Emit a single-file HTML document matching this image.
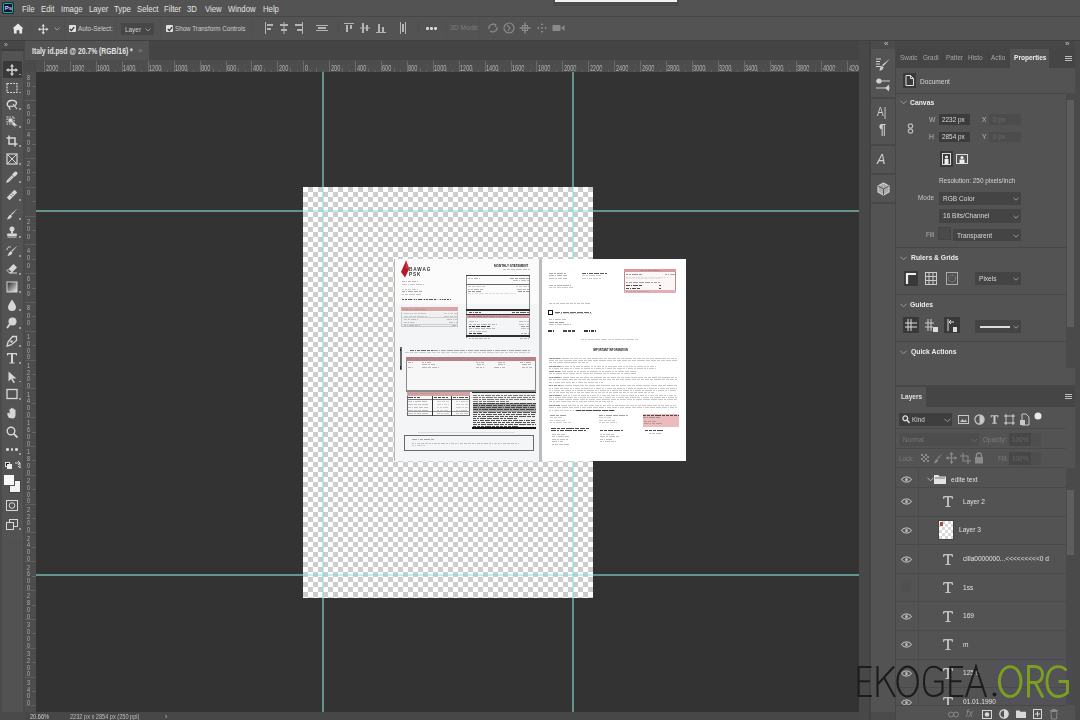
<!DOCTYPE html>
<html><head><meta charset="utf-8">
<style>
*{margin:0;padding:0;box-sizing:border-box}
html,body{width:1080px;height:720px;overflow:hidden;background:#333;font-family:"Liberation Sans",sans-serif;color:#d8d8d8}
.a{position:absolute}
.t{position:absolute;white-space:nowrap;transform-origin:0 0;line-height:1}
svg{position:absolute;overflow:visible}
</style></head><body><div id="root" style="position:absolute;left:0;top:0;width:1080px;height:720px;filter:blur(0.3px)">
<div class="a" style="left:0px;top:0px;width:1080px;height:16px;background:#535353;"></div>
<div class="a" style="left:2.2px;top:2.2px;width:11.8px;height:11.8px;background:#10303a;border-radius:2px;"></div>
<div class="a" style="left:3.2px;top:3.2px;width:9.8px;height:9.8px;background:#0a1a30;border:1.2px solid #3c9aa0;border-radius:1px;"></div>
<div class="t" style="left:4.8px;top:5.2px;font-size:6px;color:#c8d0ff;font-weight:bold;transform:scaleX(1);">Ps</div>
<div class="t" style="left:22px;top:4.6px;font-size:9px;color:#e2e2e2;transform:scaleX(0.86);">File</div>
<div class="t" style="left:41px;top:4.6px;font-size:9px;color:#e2e2e2;transform:scaleX(0.86);">Edit</div>
<div class="t" style="left:61px;top:4.6px;font-size:9px;color:#e2e2e2;transform:scaleX(0.86);">Image</div>
<div class="t" style="left:89px;top:4.6px;font-size:9px;color:#e2e2e2;transform:scaleX(0.86);">Layer</div>
<div class="t" style="left:114px;top:4.6px;font-size:9px;color:#e2e2e2;transform:scaleX(0.86);">Type</div>
<div class="t" style="left:137px;top:4.6px;font-size:9px;color:#e2e2e2;transform:scaleX(0.86);">Select</div>
<div class="t" style="left:164px;top:4.6px;font-size:9px;color:#e2e2e2;transform:scaleX(0.86);">Filter</div>
<div class="t" style="left:187px;top:4.6px;font-size:9px;color:#e2e2e2;transform:scaleX(0.86);">3D</div>
<div class="t" style="left:205px;top:4.6px;font-size:9px;color:#e2e2e2;transform:scaleX(0.86);">View</div>
<div class="t" style="left:228px;top:4.6px;font-size:9px;color:#e2e2e2;transform:scaleX(0.86);">Window</div>
<div class="t" style="left:263px;top:4.6px;font-size:9px;color:#e2e2e2;transform:scaleX(0.86);">Help</div>
<div class="a" style="left:553px;top:0px;width:126px;height:6px;background:#4b4b4b;"></div>
<div class="a" style="left:555px;top:0px;width:122px;height:2px;background:#f2f2f2;"></div>
<div class="a" style="left:0px;top:16px;width:1080px;height:1px;background:#474747;"></div>
<div class="a" style="left:0px;top:17px;width:1080px;height:23px;background:#535353;"></div>
<div class="a" style="left:0px;top:40px;width:1080px;height:1px;background:#3f3f3f;"></div>
<svg style="left:11.5px;top:23.3px" width="12" height="11" viewBox="0 0 13 12"><path d="M6.5 0.5 L12.5 6 L11 6 L11 11.5 L8 11.5 L8 8 L5 8 L5 11.5 L2 11.5 L2 6 L0.5 6 Z" fill="#e8e8e8"/></svg>
<svg style="left:38px;top:23.5px" width="10.5" height="10.5" viewBox="0 0 12 12"><path d="M6 0 L8 2.5 L6.7 2.5 L6.7 5.3 L9.5 5.3 L9.5 4 L12 6 L9.5 8 L9.5 6.7 L6.7 6.7 L6.7 9.5 L8 9.5 L6 12 L4 9.5 L5.3 9.5 L5.3 6.7 L2.5 6.7 L2.5 8 L0 6 L2.5 4 L2.5 5.3 L5.3 5.3 L5.3 2.5 L4 2.5 Z" fill="#dcdcdc"/></svg>
<svg style="left:54px;top:27px" width="6" height="4" viewBox="0 0 6 4"><path d="M0.5 0.5 L3 3 L5.5 0.5" stroke="#999" fill="none" stroke-width="1"/></svg>
<div class="a" style="left:30px;top:20px;width:1px;height:17px;background:#4f4f4f;"></div>
<div class="a" style="left:64px;top:20px;width:1px;height:17px;background:#4f4f4f;"></div>
<div class="a" style="left:116px;top:20px;width:1px;height:17px;background:#4f4f4f;"></div>
<div class="a" style="left:160px;top:20px;width:1px;height:17px;background:#4f4f4f;"></div>
<div class="a" style="left:252px;top:20px;width:1px;height:17px;background:#4f4f4f;"></div>
<div class="a" style="left:338px;top:20px;width:1px;height:17px;background:#4f4f4f;"></div>
<div class="a" style="left:418px;top:20px;width:1px;height:17px;background:#4f4f4f;"></div>
<div class="a" style="left:446px;top:20px;width:1px;height:17px;background:#4f4f4f;"></div>
<div class="a" style="left:479px;top:20px;width:1px;height:17px;background:#4f4f4f;"></div>
<div class="a" style="left:68.5px;top:25px;width:7px;height:7px;background:#e0e0e0;border-radius:1px;"></div>
<svg style="left:69px;top:25.5px" width="6" height="6" viewBox="0 0 6 6"><path d="M0.8 3 L2.4 4.6 L5.2 1.2" stroke="#333" fill="none" stroke-width="1.3"/></svg>
<div class="t" style="left:78px;top:25px;font-size:8px;color:#cccccc;transform:scaleX(0.8);">Auto-Select:</div>
<div class="a" style="left:121px;top:23.3px;width:32.5px;height:12px;background:#474747;"></div>
<div class="t" style="left:125px;top:25.5px;font-size:8px;color:#cfcfcf;transform:scaleX(0.8);">Layer</div>
<svg style="left:145px;top:28px" width="6" height="4" viewBox="0 0 6 4"><path d="M0.5 0.5 L3 3 L5.5 0.5" stroke="#999" fill="none" stroke-width="1"/></svg>
<div class="a" style="left:166px;top:25px;width:7px;height:7px;background:#e0e0e0;border-radius:1px;"></div>
<svg style="left:166.5px;top:25.5px" width="6" height="6" viewBox="0 0 6 6"><path d="M0.8 3 L2.4 4.6 L5.2 1.2" stroke="#333" fill="none" stroke-width="1.3"/></svg>
<div class="t" style="left:175px;top:25px;font-size:8px;color:#cccccc;transform:scaleX(0.78);">Show Transform Controls</div>
<svg style="left:264px;top:22px" width="10" height="12" viewBox="0 0 10 12"><rect x="1" y="0" width="1" height="12" fill="#b4b4b4"/><rect x="3" y="2" width="6" height="2" fill="#b4b4b4"/><rect x="3" y="6" width="4" height="2" fill="#b4b4b4"/></svg>
<svg style="left:279px;top:22px" width="10" height="12" viewBox="0 0 10 12"><rect x="4.5" y="0" width="1" height="12" fill="#b4b4b4"/><rect x="1" y="2" width="8" height="2" fill="#b4b4b4"/><rect x="2" y="7" width="6" height="2" fill="#b4b4b4"/></svg>
<svg style="left:294px;top:22px" width="10" height="12" viewBox="0 0 10 12"><rect x="8" y="0" width="1" height="12" fill="#b4b4b4"/><rect x="1" y="2" width="7" height="2" fill="#b4b4b4"/><rect x="3" y="7" width="5" height="2" fill="#b4b4b4"/></svg>
<svg style="left:316px;top:22px" width="12" height="12" viewBox="0 0 12 12"><rect x="0" y="3" width="12" height="1" fill="#b4b4b4"/><rect x="0" y="8" width="12" height="1" fill="#b4b4b4"/><rect x="2" y="5" width="8" height="2" fill="#b4b4b4"/></svg>
<svg style="left:344px;top:22px" width="10" height="12" viewBox="0 0 10 12"><rect x="0" y="1" width="10" height="1" fill="#b4b4b4"/><rect x="2" y="3" width="2" height="7" fill="#b4b4b4"/><rect x="6" y="3" width="2" height="4" fill="#b4b4b4"/></svg>
<svg style="left:360px;top:22px" width="10" height="12" viewBox="0 0 10 12"><rect x="0" y="5.5" width="10" height="1" fill="#b4b4b4"/><rect x="2" y="1" width="2" height="10" fill="#b4b4b4"/><rect x="6" y="3" width="2" height="6" fill="#b4b4b4"/></svg>
<svg style="left:376px;top:22px" width="10" height="12" viewBox="0 0 10 12"><rect x="0" y="10" width="10" height="1" fill="#b4b4b4"/><rect x="2" y="2" width="2" height="8" fill="#b4b4b4"/><rect x="6" y="5" width="2" height="5" fill="#b4b4b4"/></svg>
<svg style="left:399px;top:22px" width="8" height="12" viewBox="0 0 8 12"><rect x="1" y="0" width="1" height="12" fill="#b4b4b4"/><rect x="6" y="0" width="1" height="12" fill="#b4b4b4"/><rect x="3" y="2" width="2" height="8" fill="#b4b4b4"/></svg>
<div class="a" style="left:426px;top:27px;width:2.5px;height:2.5px;background:#dcdcdc;border-radius:50%;"></div>
<div class="a" style="left:430px;top:27px;width:2.5px;height:2.5px;background:#dcdcdc;border-radius:50%;"></div>
<div class="a" style="left:434px;top:27px;width:2.5px;height:2.5px;background:#dcdcdc;border-radius:50%;"></div>
<div class="t" style="left:450px;top:24px;font-size:8px;color:#7c7c7c;transform:scaleX(0.85);">3D Mode:</div>
<svg style="left:487px;top:22px" width="12" height="12" viewBox="0 0 12 12"><path d="M2 7 C1 3 6 1 9 3 M10 5 C11 9 6 11 3 9" stroke="#8a8a8a" fill="none" stroke-width="1.2"/><path d="M7 2 L9 3 L8 5" stroke="#8a8a8a" fill="none"/></svg>
<svg style="left:503px;top:22px" width="12" height="12" viewBox="0 0 12 12"><circle cx="6" cy="6" r="5" stroke="#8a8a8a" fill="none" stroke-width="1.2"/><path d="M4 3 L7 6 L5 9" stroke="#8a8a8a" fill="none" stroke-width="1.1"/></svg>
<svg style="left:519px;top:22px" width="12" height="12" viewBox="0 0 12 12"><path d="M6 0.5 V11.5 M0.5 6 H11.5" stroke="#8a8a8a" stroke-width="1.4"/><rect x="3.5" y="3.5" width="5" height="5" stroke="#8a8a8a" fill="none"/></svg>
<svg style="left:536px;top:22px" width="12" height="12" viewBox="0 0 12 12"><path d="M6 1 L7.5 3 L4.5 3 Z M6 11 L7.5 9 L4.5 9 Z M1 6 L3 4.5 L3 7.5 Z M11 6 L9 4.5 L9 7.5 Z" fill="#8a8a8a"/><circle cx="6" cy="6" r="1" fill="#8a8a8a"/></svg>
<svg style="left:552px;top:23px" width="13" height="10" viewBox="0 0 13 10"><rect x="0.5" y="2" width="8" height="6" fill="#8a8a8a"/><path d="M9 5 L12.5 2 V8 Z" fill="#8a8a8a"/></svg>
<div class="a" style="left:25px;top:41px;width:834px;height:19px;background:#444444;"></div>
<div class="a" style="left:25px;top:41px;width:124px;height:19px;background:#535353;"></div>
<div class="t" style="left:32px;top:47px;font-size:8.5px;color:#e4e4e4;font-weight:bold;transform:scaleX(0.8);">Italy id.psd @ 20.7% (RGB/16) *</div>
<div class="t" style="left:138px;top:47px;font-size:8px;color:#8a8a8a;transform:scaleX(1);">×</div>
<div class="a" style="left:0px;top:41px;width:25px;height:679px;background:#4a4a4a;"></div>
<div class="a" style="left:0px;top:41px;width:25px;height:8px;background:#474747;"></div>
<div class="t" style="left:4px;top:41px;font-size:7px;color:#bbb;transform:scaleX(1);">»</div>
<div class="a" style="left:1px;top:49px;width:23px;height:2px;background:#3e3e3e;"></div>
<div class="a" style="left:2px;top:51px;width:21px;height:489px;background:#535353;"></div>
<div class="a" style="left:2px;top:540px;width:21px;height:172px;background:#525252;"></div>
<div class="a" style="left:3px;top:61px;width:19px;height:17px;background:#393939;"></div>
<svg style="left:6.0px;top:63.5px" width="12" height="12" viewBox="0 0 12 12"><path d="M6 0 L8 2.5 L6.7 2.5 L6.7 5.3 L9.5 5.3 L9.5 4 L12 6 L9.5 8 L9.5 6.7 L6.7 6.7 L6.7 9.5 L8 9.5 L6 12 L4 9.5 L5.3 9.5 L5.3 6.7 L2.5 6.7 L2.5 8 L0 6 L2.5 4 L2.5 5.3 L5.3 5.3 L5.3 2.5 L4 2.5 Z" fill="#d6d6d6"/></svg>
<div class="a" style="left:19px;top:73.5px;width:1.5px;height:1.5px;background:#9a9a9a;"></div>
<svg style="left:6.0px;top:81.5px" width="12" height="12" viewBox="0 0 12 12"><rect x="1" y="1.5" width="10" height="9" stroke="#d6d6d6" fill="none" stroke-width="1.2" stroke-dasharray="2 1"/></svg>
<div class="a" style="left:19px;top:91.5px;width:1.5px;height:1.5px;background:#9a9a9a;"></div>
<svg style="left:6.0px;top:98.0px" width="12" height="12" viewBox="0 0 12 12"><path d="M3 9 C0 7 1 3 5 2.5 C9 2 11.5 4 10 6.5 C9 8.5 6 8.5 4.5 8 M4.5 8 C3 9 3 11 4.5 11.5" stroke="#d6d6d6" fill="none" stroke-width="1.3"/><path d="M7 6 L11 11" stroke="#d6d6d6" stroke-width="1.2"/></svg>
<div class="a" style="left:19px;top:108px;width:1.5px;height:1.5px;background:#9a9a9a;"></div>
<svg style="left:6.0px;top:116.0px" width="12" height="12" viewBox="0 0 12 12"><rect x="1" y="1" width="7" height="7" stroke="#d6d6d6" fill="none" stroke-width="1.1" stroke-dasharray="1.5 1"/><rect x="2.5" y="2.5" width="4" height="4" fill="#d6d6d6"/><path d="M6 5 L11.5 9.5 L8.5 9.8 L10 12 L6.5 8.5 Z" fill="#d6d6d6"/></svg>
<div class="a" style="left:19px;top:126px;width:1.5px;height:1.5px;background:#9a9a9a;"></div>
<svg style="left:6.0px;top:135.0px" width="12" height="12" viewBox="0 0 12 12"><path d="M3 0.5 V9 H11.5 M0.5 3 H9 V11.5" stroke="#d6d6d6" fill="none" stroke-width="1.5"/></svg>
<div class="a" style="left:19px;top:145px;width:1.5px;height:1.5px;background:#9a9a9a;"></div>
<svg style="left:6.0px;top:153.0px" width="12" height="12" viewBox="0 0 12 12"><rect x="1" y="1" width="10" height="10" stroke="#d6d6d6" fill="none" stroke-width="1.2"/><path d="M1 1 L11 11 M11 1 L1 11" stroke="#d6d6d6" stroke-width="1"/></svg>
<div class="a" style="left:19px;top:163px;width:1.5px;height:1.5px;background:#9a9a9a;"></div>
<svg style="left:6.0px;top:171.0px" width="12" height="12" viewBox="0 0 12 12"><path d="M11 1 C12 2 11.5 3.5 10 4.5 L8.5 6 L6 3.5 L7.5 2 C8.5 0.5 10 0 11 1 Z" fill="#d6d6d6"/><path d="M6.5 4.5 L1.5 9.5 L1 11 L2.5 10.5 L7.5 5.5" stroke="#d6d6d6" fill="none" stroke-width="1.2"/></svg>
<div class="a" style="left:19px;top:181px;width:1.5px;height:1.5px;background:#9a9a9a;"></div>
<svg style="left:6.0px;top:189.0px" width="12" height="12" viewBox="0 0 12 12"><path d="M8.5 0.8 L11.2 3.5 L3.5 11.2 L0.8 8.5 Z" fill="#d6d6d6"/><path d="M4.5 6 L6 7.5 M6 4.5 L7.5 6" stroke="#535353" stroke-width="0.9"/></svg>
<div class="a" style="left:19px;top:199px;width:1.5px;height:1.5px;background:#9a9a9a;"></div>
<svg style="left:6.0px;top:208.0px" width="12" height="12" viewBox="0 0 12 12"><path d="M11.5 0.5 L6 7 L5 6 Z" fill="#d6d6d6"/><path d="M4.5 6.5 C3 7 2 9 1 11.5 C4 11 5.5 10 6 8 Z" fill="#d6d6d6"/></svg>
<div class="a" style="left:19px;top:218px;width:1.5px;height:1.5px;background:#9a9a9a;"></div>
<svg style="left:6.0px;top:226.0px" width="12" height="12" viewBox="0 0 12 12"><circle cx="6" cy="3" r="2.5" fill="#d6d6d6"/><rect x="5" y="5" width="2" height="2.5" fill="#d6d6d6"/><rect x="1" y="7.5" width="10" height="2.5" rx="1" fill="#d6d6d6"/><rect x="1.5" y="10.5" width="9" height="1" fill="#d6d6d6"/></svg>
<div class="a" style="left:19px;top:236px;width:1.5px;height:1.5px;background:#9a9a9a;"></div>
<svg style="left:6.0px;top:245.0px" width="12" height="12" viewBox="0 0 12 12"><path d="M11.5 0.5 L6.5 6.5 L5.5 5.5 Z" fill="#d6d6d6"/><path d="M5 6 C3.5 6.5 2.5 8.5 1.5 11 C4.5 10.5 6 9.5 6.5 7.5 Z" fill="#d6d6d6"/><path d="M1 5 C1 2 4 1 5 2.5" stroke="#d6d6d6" fill="none" stroke-width="1"/></svg>
<div class="a" style="left:19px;top:255px;width:1.5px;height:1.5px;background:#9a9a9a;"></div>
<svg style="left:6.0px;top:263.0px" width="12" height="12" viewBox="0 0 12 12"><path d="M7.5 1 L11 4.5 L6 9.5 L2.5 6 Z" fill="#d6d6d6"/><path d="M2.5 6 L1 7.5 L3.5 10 L6 9.5 M3.5 10 H11" stroke="#d6d6d6" fill="none" stroke-width="1"/></svg>
<div class="a" style="left:19px;top:273px;width:1.5px;height:1.5px;background:#9a9a9a;"></div>
<svg style="left:6.0px;top:281.0px" width="12" height="12" viewBox="0 0 12 12"><defs><linearGradient id="gg" x1="0" x2="1" y1="0" y2="1"><stop offset="0" stop-color="#222"/><stop offset="1" stop-color="#eee"/></linearGradient></defs><rect x="1" y="1" width="10" height="10" fill="url(#gg)" stroke="#d6d6d6" stroke-width="1"/></svg>
<div class="a" style="left:19px;top:291px;width:1.5px;height:1.5px;background:#9a9a9a;"></div>
<svg style="left:6.0px;top:299.0px" width="12" height="12" viewBox="0 0 12 12"><path d="M6 0.5 C8 4 10 6 10 8 A4 4 0 0 1 2 8 C2 6 4 4 6 0.5 Z" fill="#d6d6d6"/></svg>
<div class="a" style="left:19px;top:309px;width:1.5px;height:1.5px;background:#9a9a9a;"></div>
<svg style="left:6.0px;top:317.0px" width="12" height="12" viewBox="0 0 12 12"><circle cx="6.5" cy="4.5" r="4" fill="#d6d6d6"/><path d="M4 7 L1 11" stroke="#d6d6d6" stroke-width="1.8"/></svg>
<div class="a" style="left:19px;top:327px;width:1.5px;height:1.5px;background:#9a9a9a;"></div>
<svg style="left:6.0px;top:335.0px" width="12" height="12" viewBox="0 0 12 12"><path d="M10.5 1.5 L6.5 1.5 L2 7 L1 11 L5 10 L10.5 5.5 Z" stroke="#d6d6d6" fill="none" stroke-width="1.3"/><circle cx="5.5" cy="6.5" r="1.2" fill="#d6d6d6"/></svg>
<div class="a" style="left:19px;top:345px;width:1.5px;height:1.5px;background:#9a9a9a;"></div>
<svg style="left:6.0px;top:352.0px" width="12" height="12" viewBox="0 0 12 12"><path d="M1 1 H11 V3.5 H10 L9.5 2.3 H7 V10.5 H8.5 V11.5 H3.5 V10.5 H5 V2.3 H2.5 L2 3.5 H1 Z" fill="#d6d6d6"/></svg>
<div class="a" style="left:19px;top:362px;width:1.5px;height:1.5px;background:#9a9a9a;"></div>
<svg style="left:6.0px;top:370.5px" width="12" height="12" viewBox="0 0 12 12"><path d="M2.5 0.5 L10.5 7.5 L6.5 7.5 L9 11.5 L7.5 12 L5 8 L2.5 10.5 Z" fill="#d6d6d6"/></svg>
<div class="a" style="left:19px;top:380.5px;width:1.5px;height:1.5px;background:#9a9a9a;"></div>
<svg style="left:6.0px;top:388.0px" width="12" height="12" viewBox="0 0 12 12"><rect x="1" y="1.5" width="10" height="9" stroke="#d6d6d6" fill="none" stroke-width="1.3"/></svg>
<div class="a" style="left:19px;top:398px;width:1.5px;height:1.5px;background:#9a9a9a;"></div>
<svg style="left:6.0px;top:406.5px" width="12" height="12" viewBox="0 0 12 12"><path d="M3 11 C1.5 9 1 7 1.5 6 C2 5.5 3 6 3.5 7 V2.5 C3.5 1.5 5 1.5 5 2.5 V1.5 C5 0.5 6.5 0.5 6.5 1.5 V2 C6.5 1 8 1 8 2 V3 C8 2 9.5 2 9.5 3 V8 C9.5 10 8.5 11 7.5 11.5 Z" fill="#d6d6d6"/></svg>
<svg style="left:6.0px;top:425.5px" width="12" height="12" viewBox="0 0 12 12"><circle cx="5" cy="5" r="3.8" stroke="#d6d6d6" fill="none" stroke-width="1.4"/><path d="M7.8 7.8 L11.5 11.5" stroke="#d6d6d6" stroke-width="1.8"/></svg>
<div class="a" style="left:6px;top:448px;width:2.5px;height:2.5px;background:#d6d6d6;border-radius:50%;"></div>
<div class="a" style="left:10.5px;top:448px;width:2.5px;height:2.5px;background:#d6d6d6;border-radius:50%;"></div>
<div class="a" style="left:15px;top:448px;width:2.5px;height:2.5px;background:#d6d6d6;border-radius:50%;"></div>
<div class="a" style="left:19px;top:453px;width:1.5px;height:1.5px;background:#9a9a9a;"></div>
<div class="a" style="left:5px;top:462px;width:5px;height:5px;background:#111;border:1px solid #ddd;"></div>
<div class="a" style="left:7px;top:464px;width:5px;height:5px;background:#eee;"></div>
<svg style="left:14px;top:461px" width="8" height="8" viewBox="0 0 8 8"><path d="M1 2 H6 V7 M4 0 L6 2 L4 4 M6 7 L4 5" stroke="#d6d6d6" fill="none"/></svg>
<div class="a" style="left:9px;top:480px;width:11.5px;height:12.5px;background:#f2f2f2;border:1px solid #444;"></div>
<div class="a" style="left:3px;top:474px;width:11.5px;height:12px;background:#f8f8f8;border:1px solid #555;"></div>
<svg style="left:6px;top:500px" width="12" height="11" viewBox="0 0 12 11"><rect x="0.5" y="0.5" width="11" height="10" stroke="#d6d6d6" fill="none"/><circle cx="6" cy="5.5" r="2.8" stroke="#d6d6d6" fill="none"/></svg>
<svg style="left:6px;top:519px" width="12" height="11" viewBox="0 0 12 11"><rect x="3.5" y="0.5" width="8" height="7" stroke="#d6d6d6" fill="none"/><rect x="0.5" y="3.5" width="7" height="7" fill="#535353" stroke="#d6d6d6"/></svg>
<div class="a" style="left:19px;top:528px;width:1.5px;height:1.5px;background:#9a9a9a;"></div>
<div class="a" style="left:25px;top:60px;width:834px;height:12px;background:#4d4d4d;"></div>
<div class="a" style="left:25px;top:60px;width:11px;height:652px;background:#4d4d4d;"></div>
<div class="a" style="left:25px;top:60px;width:11px;height:12px;background:#4a4a4a;"></div>
<div class="a" style="left:44.1px;top:61px;width:1px;height:11px;background:#6a6a6a;"></div>
<div class="t" style="left:45.6px;top:63.7px;font-size:9px;color:#b0b0b0;transform:scaleX(0.62);">2000</div>
<div class="a" style="left:70.0px;top:61px;width:1px;height:11px;background:#6a6a6a;"></div>
<div class="t" style="left:71.5px;top:63.7px;font-size:9px;color:#b0b0b0;transform:scaleX(0.62);">1800</div>
<div class="a" style="left:95.9px;top:61px;width:1px;height:11px;background:#6a6a6a;"></div>
<div class="t" style="left:97.4px;top:63.7px;font-size:9px;color:#b0b0b0;transform:scaleX(0.62);">1600</div>
<div class="a" style="left:121.8px;top:61px;width:1px;height:11px;background:#6a6a6a;"></div>
<div class="t" style="left:123.3px;top:63.7px;font-size:9px;color:#b0b0b0;transform:scaleX(0.62);">1400</div>
<div class="a" style="left:147.7px;top:61px;width:1px;height:11px;background:#6a6a6a;"></div>
<div class="t" style="left:149.2px;top:63.7px;font-size:9px;color:#b0b0b0;transform:scaleX(0.62);">1200</div>
<div class="a" style="left:173.6px;top:61px;width:1px;height:11px;background:#6a6a6a;"></div>
<div class="t" style="left:175.1px;top:63.7px;font-size:9px;color:#b0b0b0;transform:scaleX(0.62);">1000</div>
<div class="a" style="left:199.6px;top:61px;width:1px;height:11px;background:#6a6a6a;"></div>
<div class="t" style="left:201.1px;top:63.7px;font-size:9px;color:#b0b0b0;transform:scaleX(0.62);">800</div>
<div class="a" style="left:225.5px;top:61px;width:1px;height:11px;background:#6a6a6a;"></div>
<div class="t" style="left:227.0px;top:63.7px;font-size:9px;color:#b0b0b0;transform:scaleX(0.62);">600</div>
<div class="a" style="left:251.4px;top:61px;width:1px;height:11px;background:#6a6a6a;"></div>
<div class="t" style="left:252.9px;top:63.7px;font-size:9px;color:#b0b0b0;transform:scaleX(0.62);">400</div>
<div class="a" style="left:277.3px;top:61px;width:1px;height:11px;background:#6a6a6a;"></div>
<div class="t" style="left:278.8px;top:63.7px;font-size:9px;color:#b0b0b0;transform:scaleX(0.62);">200</div>
<div class="a" style="left:303.2px;top:61px;width:1px;height:11px;background:#6a6a6a;"></div>
<div class="t" style="left:304.7px;top:63.7px;font-size:9px;color:#b0b0b0;transform:scaleX(0.62);">0</div>
<div class="a" style="left:329.1px;top:61px;width:1px;height:11px;background:#6a6a6a;"></div>
<div class="t" style="left:330.6px;top:63.7px;font-size:9px;color:#b0b0b0;transform:scaleX(0.62);">200</div>
<div class="a" style="left:355.0px;top:61px;width:1px;height:11px;background:#6a6a6a;"></div>
<div class="t" style="left:356.5px;top:63.7px;font-size:9px;color:#b0b0b0;transform:scaleX(0.62);">400</div>
<div class="a" style="left:380.9px;top:61px;width:1px;height:11px;background:#6a6a6a;"></div>
<div class="t" style="left:382.4px;top:63.7px;font-size:9px;color:#b0b0b0;transform:scaleX(0.62);">600</div>
<div class="a" style="left:406.8px;top:61px;width:1px;height:11px;background:#6a6a6a;"></div>
<div class="t" style="left:408.3px;top:63.7px;font-size:9px;color:#b0b0b0;transform:scaleX(0.62);">800</div>
<div class="a" style="left:432.8px;top:61px;width:1px;height:11px;background:#6a6a6a;"></div>
<div class="t" style="left:434.2px;top:63.7px;font-size:9px;color:#b0b0b0;transform:scaleX(0.62);">1000</div>
<div class="a" style="left:458.7px;top:61px;width:1px;height:11px;background:#6a6a6a;"></div>
<div class="t" style="left:460.2px;top:63.7px;font-size:9px;color:#b0b0b0;transform:scaleX(0.62);">1200</div>
<div class="a" style="left:484.6px;top:61px;width:1px;height:11px;background:#6a6a6a;"></div>
<div class="t" style="left:486.1px;top:63.7px;font-size:9px;color:#b0b0b0;transform:scaleX(0.62);">1400</div>
<div class="a" style="left:510.5px;top:61px;width:1px;height:11px;background:#6a6a6a;"></div>
<div class="t" style="left:512.0px;top:63.7px;font-size:9px;color:#b0b0b0;transform:scaleX(0.62);">1600</div>
<div class="a" style="left:536.4px;top:61px;width:1px;height:11px;background:#6a6a6a;"></div>
<div class="t" style="left:537.9px;top:63.7px;font-size:9px;color:#b0b0b0;transform:scaleX(0.62);">1800</div>
<div class="a" style="left:562.3px;top:61px;width:1px;height:11px;background:#6a6a6a;"></div>
<div class="t" style="left:563.8px;top:63.7px;font-size:9px;color:#b0b0b0;transform:scaleX(0.62);">2000</div>
<div class="a" style="left:588.2px;top:61px;width:1px;height:11px;background:#6a6a6a;"></div>
<div class="t" style="left:589.7px;top:63.7px;font-size:9px;color:#b0b0b0;transform:scaleX(0.62);">2200</div>
<div class="a" style="left:614.1px;top:61px;width:1px;height:11px;background:#6a6a6a;"></div>
<div class="t" style="left:615.6px;top:63.7px;font-size:9px;color:#b0b0b0;transform:scaleX(0.62);">2400</div>
<div class="a" style="left:640.0px;top:61px;width:1px;height:11px;background:#6a6a6a;"></div>
<div class="t" style="left:641.5px;top:63.7px;font-size:9px;color:#b0b0b0;transform:scaleX(0.62);">2600</div>
<div class="a" style="left:665.9px;top:61px;width:1px;height:11px;background:#6a6a6a;"></div>
<div class="t" style="left:667.4px;top:63.7px;font-size:9px;color:#b0b0b0;transform:scaleX(0.62);">2800</div>
<div class="a" style="left:691.8px;top:61px;width:1px;height:11px;background:#6a6a6a;"></div>
<div class="t" style="left:693.3px;top:63.7px;font-size:9px;color:#b0b0b0;transform:scaleX(0.62);">3000</div>
<div class="a" style="left:717.8px;top:61px;width:1px;height:11px;background:#6a6a6a;"></div>
<div class="t" style="left:719.3px;top:63.7px;font-size:9px;color:#b0b0b0;transform:scaleX(0.62);">3200</div>
<div class="a" style="left:743.7px;top:61px;width:1px;height:11px;background:#6a6a6a;"></div>
<div class="t" style="left:745.2px;top:63.7px;font-size:9px;color:#b0b0b0;transform:scaleX(0.62);">3400</div>
<div class="a" style="left:769.6px;top:61px;width:1px;height:11px;background:#6a6a6a;"></div>
<div class="t" style="left:771.1px;top:63.7px;font-size:9px;color:#b0b0b0;transform:scaleX(0.62);">3600</div>
<div class="a" style="left:795.5px;top:61px;width:1px;height:11px;background:#6a6a6a;"></div>
<div class="t" style="left:797.0px;top:63.7px;font-size:9px;color:#b0b0b0;transform:scaleX(0.62);">3800</div>
<div class="a" style="left:821.4px;top:61px;width:1px;height:11px;background:#6a6a6a;"></div>
<div class="t" style="left:822.9px;top:63.7px;font-size:9px;color:#b0b0b0;transform:scaleX(0.62);">4000</div>
<div class="a" style="left:847.3px;top:61px;width:1px;height:11px;background:#6a6a6a;"></div>
<div class="t" style="left:848.8px;top:63.7px;font-size:9px;color:#b0b0b0;transform:scaleX(0.62);">4200</div>
<div class="a" style="left:57.1px;top:68px;width:1px;height:4px;background:#656565;"></div>
<div class="a" style="left:83.0px;top:68px;width:1px;height:4px;background:#656565;"></div>
<div class="a" style="left:108.9px;top:68px;width:1px;height:4px;background:#656565;"></div>
<div class="a" style="left:134.8px;top:68px;width:1px;height:4px;background:#656565;"></div>
<div class="a" style="left:160.7px;top:68px;width:1px;height:4px;background:#656565;"></div>
<div class="a" style="left:186.6px;top:68px;width:1px;height:4px;background:#656565;"></div>
<div class="a" style="left:212.5px;top:68px;width:1px;height:4px;background:#656565;"></div>
<div class="a" style="left:238.4px;top:68px;width:1px;height:4px;background:#656565;"></div>
<div class="a" style="left:264.3px;top:68px;width:1px;height:4px;background:#656565;"></div>
<div class="a" style="left:290.2px;top:68px;width:1px;height:4px;background:#656565;"></div>
<div class="a" style="left:316.2px;top:68px;width:1px;height:4px;background:#656565;"></div>
<div class="a" style="left:342.1px;top:68px;width:1px;height:4px;background:#656565;"></div>
<div class="a" style="left:368.0px;top:68px;width:1px;height:4px;background:#656565;"></div>
<div class="a" style="left:393.9px;top:68px;width:1px;height:4px;background:#656565;"></div>
<div class="a" style="left:419.8px;top:68px;width:1px;height:4px;background:#656565;"></div>
<div class="a" style="left:445.7px;top:68px;width:1px;height:4px;background:#656565;"></div>
<div class="a" style="left:471.6px;top:68px;width:1px;height:4px;background:#656565;"></div>
<div class="a" style="left:497.5px;top:68px;width:1px;height:4px;background:#656565;"></div>
<div class="a" style="left:523.4px;top:68px;width:1px;height:4px;background:#656565;"></div>
<div class="a" style="left:549.3px;top:68px;width:1px;height:4px;background:#656565;"></div>
<div class="a" style="left:575.3px;top:68px;width:1px;height:4px;background:#656565;"></div>
<div class="a" style="left:601.2px;top:68px;width:1px;height:4px;background:#656565;"></div>
<div class="a" style="left:627.1px;top:68px;width:1px;height:4px;background:#656565;"></div>
<div class="a" style="left:653.0px;top:68px;width:1px;height:4px;background:#656565;"></div>
<div class="a" style="left:678.9px;top:68px;width:1px;height:4px;background:#656565;"></div>
<div class="a" style="left:704.8px;top:68px;width:1px;height:4px;background:#656565;"></div>
<div class="a" style="left:730.7px;top:68px;width:1px;height:4px;background:#656565;"></div>
<div class="a" style="left:756.6px;top:68px;width:1px;height:4px;background:#656565;"></div>
<div class="a" style="left:782.5px;top:68px;width:1px;height:4px;background:#656565;"></div>
<div class="a" style="left:808.4px;top:68px;width:1px;height:4px;background:#656565;"></div>
<div class="a" style="left:834.4px;top:68px;width:1px;height:4px;background:#656565;"></div>
<div class="a" style="left:37.6px;top:70px;width:1px;height:2px;background:#606060;"></div>
<div class="a" style="left:50.6px;top:70px;width:1px;height:2px;background:#606060;"></div>
<div class="a" style="left:63.5px;top:70px;width:1px;height:2px;background:#606060;"></div>
<div class="a" style="left:76.5px;top:70px;width:1px;height:2px;background:#606060;"></div>
<div class="a" style="left:89.4px;top:70px;width:1px;height:2px;background:#606060;"></div>
<div class="a" style="left:102.4px;top:70px;width:1px;height:2px;background:#606060;"></div>
<div class="a" style="left:115.4px;top:70px;width:1px;height:2px;background:#606060;"></div>
<div class="a" style="left:128.3px;top:70px;width:1px;height:2px;background:#606060;"></div>
<div class="a" style="left:141.3px;top:70px;width:1px;height:2px;background:#606060;"></div>
<div class="a" style="left:154.2px;top:70px;width:1px;height:2px;background:#606060;"></div>
<div class="a" style="left:167.2px;top:70px;width:1px;height:2px;background:#606060;"></div>
<div class="a" style="left:180.1px;top:70px;width:1px;height:2px;background:#606060;"></div>
<div class="a" style="left:193.1px;top:70px;width:1px;height:2px;background:#606060;"></div>
<div class="a" style="left:206.0px;top:70px;width:1px;height:2px;background:#606060;"></div>
<div class="a" style="left:219.0px;top:70px;width:1px;height:2px;background:#606060;"></div>
<div class="a" style="left:231.9px;top:70px;width:1px;height:2px;background:#606060;"></div>
<div class="a" style="left:244.9px;top:70px;width:1px;height:2px;background:#606060;"></div>
<div class="a" style="left:257.9px;top:70px;width:1px;height:2px;background:#606060;"></div>
<div class="a" style="left:270.8px;top:70px;width:1px;height:2px;background:#606060;"></div>
<div class="a" style="left:283.8px;top:70px;width:1px;height:2px;background:#606060;"></div>
<div class="a" style="left:296.7px;top:70px;width:1px;height:2px;background:#606060;"></div>
<div class="a" style="left:309.7px;top:70px;width:1px;height:2px;background:#606060;"></div>
<div class="a" style="left:322.6px;top:70px;width:1px;height:2px;background:#606060;"></div>
<div class="a" style="left:335.6px;top:70px;width:1px;height:2px;background:#606060;"></div>
<div class="a" style="left:348.5px;top:70px;width:1px;height:2px;background:#606060;"></div>
<div class="a" style="left:361.5px;top:70px;width:1px;height:2px;background:#606060;"></div>
<div class="a" style="left:374.5px;top:70px;width:1px;height:2px;background:#606060;"></div>
<div class="a" style="left:387.4px;top:70px;width:1px;height:2px;background:#606060;"></div>
<div class="a" style="left:400.4px;top:70px;width:1px;height:2px;background:#606060;"></div>
<div class="a" style="left:413.3px;top:70px;width:1px;height:2px;background:#606060;"></div>
<div class="a" style="left:426.3px;top:70px;width:1px;height:2px;background:#606060;"></div>
<div class="a" style="left:439.2px;top:70px;width:1px;height:2px;background:#606060;"></div>
<div class="a" style="left:452.2px;top:70px;width:1px;height:2px;background:#606060;"></div>
<div class="a" style="left:465.1px;top:70px;width:1px;height:2px;background:#606060;"></div>
<div class="a" style="left:478.1px;top:70px;width:1px;height:2px;background:#606060;"></div>
<div class="a" style="left:491.0px;top:70px;width:1px;height:2px;background:#606060;"></div>
<div class="a" style="left:504.0px;top:70px;width:1px;height:2px;background:#606060;"></div>
<div class="a" style="left:517.0px;top:70px;width:1px;height:2px;background:#606060;"></div>
<div class="a" style="left:529.9px;top:70px;width:1px;height:2px;background:#606060;"></div>
<div class="a" style="left:542.9px;top:70px;width:1px;height:2px;background:#606060;"></div>
<div class="a" style="left:555.8px;top:70px;width:1px;height:2px;background:#606060;"></div>
<div class="a" style="left:568.8px;top:70px;width:1px;height:2px;background:#606060;"></div>
<div class="a" style="left:581.7px;top:70px;width:1px;height:2px;background:#606060;"></div>
<div class="a" style="left:594.7px;top:70px;width:1px;height:2px;background:#606060;"></div>
<div class="a" style="left:607.6px;top:70px;width:1px;height:2px;background:#606060;"></div>
<div class="a" style="left:620.6px;top:70px;width:1px;height:2px;background:#606060;"></div>
<div class="a" style="left:633.6px;top:70px;width:1px;height:2px;background:#606060;"></div>
<div class="a" style="left:646.5px;top:70px;width:1px;height:2px;background:#606060;"></div>
<div class="a" style="left:659.5px;top:70px;width:1px;height:2px;background:#606060;"></div>
<div class="a" style="left:672.4px;top:70px;width:1px;height:2px;background:#606060;"></div>
<div class="a" style="left:685.4px;top:70px;width:1px;height:2px;background:#606060;"></div>
<div class="a" style="left:698.3px;top:70px;width:1px;height:2px;background:#606060;"></div>
<div class="a" style="left:711.3px;top:70px;width:1px;height:2px;background:#606060;"></div>
<div class="a" style="left:724.2px;top:70px;width:1px;height:2px;background:#606060;"></div>
<div class="a" style="left:737.2px;top:70px;width:1px;height:2px;background:#606060;"></div>
<div class="a" style="left:750.1px;top:70px;width:1px;height:2px;background:#606060;"></div>
<div class="a" style="left:763.1px;top:70px;width:1px;height:2px;background:#606060;"></div>
<div class="a" style="left:776.1px;top:70px;width:1px;height:2px;background:#606060;"></div>
<div class="a" style="left:789.0px;top:70px;width:1px;height:2px;background:#606060;"></div>
<div class="a" style="left:802.0px;top:70px;width:1px;height:2px;background:#606060;"></div>
<div class="a" style="left:814.9px;top:70px;width:1px;height:2px;background:#606060;"></div>
<div class="a" style="left:827.9px;top:70px;width:1px;height:2px;background:#606060;"></div>
<div class="a" style="left:840.8px;top:70px;width:1px;height:2px;background:#606060;"></div>
<div class="a" style="left:853.8px;top:70px;width:1px;height:2px;background:#606060;"></div>
<div class="t" style="left:26.5px;top:74.7px;font-size:6.8px;color:#b0b0b0;transform:scaleX(0.8);">8</div>
<div class="t" style="left:26.5px;top:82.2px;font-size:6.8px;color:#b0b0b0;transform:scaleX(0.8);">0</div>
<div class="t" style="left:26.5px;top:89.7px;font-size:6.8px;color:#b0b0b0;transform:scaleX(0.8);">0</div>
<div class="a" style="left:25px;top:100.3px;width:11px;height:1px;background:#5e5e5e;"></div>
<div class="t" style="left:26.5px;top:103.5px;font-size:6.8px;color:#b0b0b0;transform:scaleX(0.8);">6</div>
<div class="t" style="left:26.5px;top:111.0px;font-size:6.8px;color:#b0b0b0;transform:scaleX(0.8);">0</div>
<div class="t" style="left:26.5px;top:118.5px;font-size:6.8px;color:#b0b0b0;transform:scaleX(0.8);">0</div>
<div class="a" style="left:25px;top:129.1px;width:11px;height:1px;background:#5e5e5e;"></div>
<div class="t" style="left:26.5px;top:132.3px;font-size:6.8px;color:#b0b0b0;transform:scaleX(0.8);">4</div>
<div class="t" style="left:26.5px;top:139.8px;font-size:6.8px;color:#b0b0b0;transform:scaleX(0.8);">0</div>
<div class="t" style="left:26.5px;top:147.3px;font-size:6.8px;color:#b0b0b0;transform:scaleX(0.8);">0</div>
<div class="a" style="left:25px;top:157.9px;width:11px;height:1px;background:#5e5e5e;"></div>
<div class="t" style="left:26.5px;top:161.1px;font-size:6.8px;color:#b0b0b0;transform:scaleX(0.8);">2</div>
<div class="t" style="left:26.5px;top:168.6px;font-size:6.8px;color:#b0b0b0;transform:scaleX(0.8);">0</div>
<div class="t" style="left:26.5px;top:176.1px;font-size:6.8px;color:#b0b0b0;transform:scaleX(0.8);">0</div>
<div class="a" style="left:25px;top:186.7px;width:11px;height:1px;background:#5e5e5e;"></div>
<div class="t" style="left:26.5px;top:189.9px;font-size:6.8px;color:#b0b0b0;transform:scaleX(0.8);">0</div>
<div class="a" style="left:25px;top:215.5px;width:11px;height:1px;background:#5e5e5e;"></div>
<div class="t" style="left:26.5px;top:218.7px;font-size:6.8px;color:#b0b0b0;transform:scaleX(0.8);">2</div>
<div class="t" style="left:26.5px;top:226.2px;font-size:6.8px;color:#b0b0b0;transform:scaleX(0.8);">0</div>
<div class="t" style="left:26.5px;top:233.7px;font-size:6.8px;color:#b0b0b0;transform:scaleX(0.8);">0</div>
<div class="a" style="left:25px;top:244.3px;width:11px;height:1px;background:#5e5e5e;"></div>
<div class="t" style="left:26.5px;top:247.5px;font-size:6.8px;color:#b0b0b0;transform:scaleX(0.8);">4</div>
<div class="t" style="left:26.5px;top:255.0px;font-size:6.8px;color:#b0b0b0;transform:scaleX(0.8);">0</div>
<div class="t" style="left:26.5px;top:262.5px;font-size:6.8px;color:#b0b0b0;transform:scaleX(0.8);">0</div>
<div class="a" style="left:25px;top:273.1px;width:11px;height:1px;background:#5e5e5e;"></div>
<div class="t" style="left:26.5px;top:276.3px;font-size:6.8px;color:#b0b0b0;transform:scaleX(0.8);">6</div>
<div class="t" style="left:26.5px;top:283.8px;font-size:6.8px;color:#b0b0b0;transform:scaleX(0.8);">0</div>
<div class="t" style="left:26.5px;top:291.3px;font-size:6.8px;color:#b0b0b0;transform:scaleX(0.8);">0</div>
<div class="a" style="left:25px;top:301.9px;width:11px;height:1px;background:#5e5e5e;"></div>
<div class="t" style="left:26.5px;top:305.1px;font-size:6.8px;color:#b0b0b0;transform:scaleX(0.8);">8</div>
<div class="t" style="left:26.5px;top:312.6px;font-size:6.8px;color:#b0b0b0;transform:scaleX(0.8);">0</div>
<div class="t" style="left:26.5px;top:320.1px;font-size:6.8px;color:#b0b0b0;transform:scaleX(0.8);">0</div>
<div class="a" style="left:25px;top:330.8px;width:11px;height:1px;background:#5e5e5e;"></div>
<div class="t" style="left:26.5px;top:334.0px;font-size:6.8px;color:#b0b0b0;transform:scaleX(0.8);">1</div>
<div class="t" style="left:26.5px;top:340.8px;font-size:6.8px;color:#b0b0b0;transform:scaleX(0.8);">0</div>
<div class="t" style="left:26.5px;top:347.6px;font-size:6.8px;color:#b0b0b0;transform:scaleX(0.8);">0</div>
<div class="t" style="left:26.5px;top:354.4px;font-size:6.8px;color:#b0b0b0;transform:scaleX(0.8);">0</div>
<div class="a" style="left:25px;top:359.6px;width:11px;height:1px;background:#5e5e5e;"></div>
<div class="t" style="left:26.5px;top:362.8px;font-size:6.8px;color:#b0b0b0;transform:scaleX(0.8);">1</div>
<div class="t" style="left:26.5px;top:369.6px;font-size:6.8px;color:#b0b0b0;transform:scaleX(0.8);">2</div>
<div class="t" style="left:26.5px;top:376.4px;font-size:6.8px;color:#b0b0b0;transform:scaleX(0.8);">0</div>
<div class="t" style="left:26.5px;top:383.2px;font-size:6.8px;color:#b0b0b0;transform:scaleX(0.8);">0</div>
<div class="a" style="left:25px;top:388.4px;width:11px;height:1px;background:#5e5e5e;"></div>
<div class="t" style="left:26.5px;top:391.6px;font-size:6.8px;color:#b0b0b0;transform:scaleX(0.8);">1</div>
<div class="t" style="left:26.5px;top:398.4px;font-size:6.8px;color:#b0b0b0;transform:scaleX(0.8);">4</div>
<div class="t" style="left:26.5px;top:405.2px;font-size:6.8px;color:#b0b0b0;transform:scaleX(0.8);">0</div>
<div class="t" style="left:26.5px;top:412.0px;font-size:6.8px;color:#b0b0b0;transform:scaleX(0.8);">0</div>
<div class="a" style="left:25px;top:417.2px;width:11px;height:1px;background:#5e5e5e;"></div>
<div class="t" style="left:26.5px;top:420.4px;font-size:6.8px;color:#b0b0b0;transform:scaleX(0.8);">1</div>
<div class="t" style="left:26.5px;top:427.2px;font-size:6.8px;color:#b0b0b0;transform:scaleX(0.8);">6</div>
<div class="t" style="left:26.5px;top:434.0px;font-size:6.8px;color:#b0b0b0;transform:scaleX(0.8);">0</div>
<div class="t" style="left:26.5px;top:440.8px;font-size:6.8px;color:#b0b0b0;transform:scaleX(0.8);">0</div>
<div class="a" style="left:25px;top:446.0px;width:11px;height:1px;background:#5e5e5e;"></div>
<div class="t" style="left:26.5px;top:449.2px;font-size:6.8px;color:#b0b0b0;transform:scaleX(0.8);">1</div>
<div class="t" style="left:26.5px;top:456.0px;font-size:6.8px;color:#b0b0b0;transform:scaleX(0.8);">8</div>
<div class="t" style="left:26.5px;top:462.8px;font-size:6.8px;color:#b0b0b0;transform:scaleX(0.8);">0</div>
<div class="t" style="left:26.5px;top:469.6px;font-size:6.8px;color:#b0b0b0;transform:scaleX(0.8);">0</div>
<div class="a" style="left:25px;top:474.8px;width:11px;height:1px;background:#5e5e5e;"></div>
<div class="t" style="left:26.5px;top:478.0px;font-size:6.8px;color:#b0b0b0;transform:scaleX(0.8);">2</div>
<div class="t" style="left:26.5px;top:484.8px;font-size:6.8px;color:#b0b0b0;transform:scaleX(0.8);">0</div>
<div class="t" style="left:26.5px;top:491.6px;font-size:6.8px;color:#b0b0b0;transform:scaleX(0.8);">0</div>
<div class="t" style="left:26.5px;top:498.4px;font-size:6.8px;color:#b0b0b0;transform:scaleX(0.8);">0</div>
<div class="a" style="left:25px;top:503.6px;width:11px;height:1px;background:#5e5e5e;"></div>
<div class="t" style="left:26.5px;top:506.8px;font-size:6.8px;color:#b0b0b0;transform:scaleX(0.8);">2</div>
<div class="t" style="left:26.5px;top:513.6px;font-size:6.8px;color:#b0b0b0;transform:scaleX(0.8);">2</div>
<div class="t" style="left:26.5px;top:520.4px;font-size:6.8px;color:#b0b0b0;transform:scaleX(0.8);">0</div>
<div class="t" style="left:26.5px;top:527.2px;font-size:6.8px;color:#b0b0b0;transform:scaleX(0.8);">0</div>
<div class="a" style="left:25px;top:532.4px;width:11px;height:1px;background:#5e5e5e;"></div>
<div class="t" style="left:26.5px;top:535.6px;font-size:6.8px;color:#b0b0b0;transform:scaleX(0.8);">2</div>
<div class="t" style="left:26.5px;top:542.4px;font-size:6.8px;color:#b0b0b0;transform:scaleX(0.8);">4</div>
<div class="t" style="left:26.5px;top:549.2px;font-size:6.8px;color:#b0b0b0;transform:scaleX(0.8);">0</div>
<div class="t" style="left:26.5px;top:556.0px;font-size:6.8px;color:#b0b0b0;transform:scaleX(0.8);">0</div>
<div class="a" style="left:25px;top:561.3px;width:11px;height:1px;background:#5e5e5e;"></div>
<div class="t" style="left:26.5px;top:564.5px;font-size:6.8px;color:#b0b0b0;transform:scaleX(0.8);">2</div>
<div class="t" style="left:26.5px;top:571.3px;font-size:6.8px;color:#b0b0b0;transform:scaleX(0.8);">6</div>
<div class="t" style="left:26.5px;top:578.1px;font-size:6.8px;color:#b0b0b0;transform:scaleX(0.8);">0</div>
<div class="t" style="left:26.5px;top:584.9px;font-size:6.8px;color:#b0b0b0;transform:scaleX(0.8);">0</div>
<div class="a" style="left:25px;top:590.1px;width:11px;height:1px;background:#5e5e5e;"></div>
<div class="t" style="left:26.5px;top:593.3px;font-size:6.8px;color:#b0b0b0;transform:scaleX(0.8);">2</div>
<div class="t" style="left:26.5px;top:600.1px;font-size:6.8px;color:#b0b0b0;transform:scaleX(0.8);">8</div>
<div class="t" style="left:26.5px;top:606.9px;font-size:6.8px;color:#b0b0b0;transform:scaleX(0.8);">0</div>
<div class="t" style="left:26.5px;top:613.7px;font-size:6.8px;color:#b0b0b0;transform:scaleX(0.8);">0</div>
<div class="a" style="left:25px;top:618.9px;width:11px;height:1px;background:#5e5e5e;"></div>
<div class="t" style="left:26.5px;top:622.1px;font-size:6.8px;color:#b0b0b0;transform:scaleX(0.8);">3</div>
<div class="t" style="left:26.5px;top:628.9px;font-size:6.8px;color:#b0b0b0;transform:scaleX(0.8);">0</div>
<div class="t" style="left:26.5px;top:635.7px;font-size:6.8px;color:#b0b0b0;transform:scaleX(0.8);">0</div>
<div class="t" style="left:26.5px;top:642.5px;font-size:6.8px;color:#b0b0b0;transform:scaleX(0.8);">0</div>
<div class="a" style="left:25px;top:647.7px;width:11px;height:1px;background:#5e5e5e;"></div>
<div class="t" style="left:26.5px;top:650.9px;font-size:6.8px;color:#b0b0b0;transform:scaleX(0.8);">3</div>
<div class="t" style="left:26.5px;top:657.7px;font-size:6.8px;color:#b0b0b0;transform:scaleX(0.8);">2</div>
<div class="t" style="left:26.5px;top:664.5px;font-size:6.8px;color:#b0b0b0;transform:scaleX(0.8);">0</div>
<div class="t" style="left:26.5px;top:671.3px;font-size:6.8px;color:#b0b0b0;transform:scaleX(0.8);">0</div>
<div class="a" style="left:25px;top:676.5px;width:11px;height:1px;background:#5e5e5e;"></div>
<div class="t" style="left:26.5px;top:679.7px;font-size:6.8px;color:#b0b0b0;transform:scaleX(0.8);">3</div>
<div class="t" style="left:26.5px;top:686.5px;font-size:6.8px;color:#b0b0b0;transform:scaleX(0.8);">4</div>
<div class="t" style="left:26.5px;top:693.3px;font-size:6.8px;color:#b0b0b0;transform:scaleX(0.8);">0</div>
<div class="t" style="left:26.5px;top:700.1px;font-size:6.8px;color:#b0b0b0;transform:scaleX(0.8);">0</div>
<div class="a" style="left:25px;top:705.3px;width:11px;height:1px;background:#5e5e5e;"></div>
<div class="a" style="left:32px;top:85.9px;width:4px;height:1px;background:#656565;"></div>
<div class="a" style="left:32px;top:114.7px;width:4px;height:1px;background:#656565;"></div>
<div class="a" style="left:32px;top:143.5px;width:4px;height:1px;background:#656565;"></div>
<div class="a" style="left:32px;top:172.3px;width:4px;height:1px;background:#656565;"></div>
<div class="a" style="left:32px;top:201.1px;width:4px;height:1px;background:#656565;"></div>
<div class="a" style="left:32px;top:229.9px;width:4px;height:1px;background:#656565;"></div>
<div class="a" style="left:32px;top:258.7px;width:4px;height:1px;background:#656565;"></div>
<div class="a" style="left:32px;top:287.5px;width:4px;height:1px;background:#656565;"></div>
<div class="a" style="left:32px;top:316.4px;width:4px;height:1px;background:#656565;"></div>
<div class="a" style="left:32px;top:345.2px;width:4px;height:1px;background:#656565;"></div>
<div class="a" style="left:32px;top:374.0px;width:4px;height:1px;background:#656565;"></div>
<div class="a" style="left:32px;top:402.8px;width:4px;height:1px;background:#656565;"></div>
<div class="a" style="left:32px;top:431.6px;width:4px;height:1px;background:#656565;"></div>
<div class="a" style="left:32px;top:460.4px;width:4px;height:1px;background:#656565;"></div>
<div class="a" style="left:32px;top:489.2px;width:4px;height:1px;background:#656565;"></div>
<div class="a" style="left:32px;top:518.0px;width:4px;height:1px;background:#656565;"></div>
<div class="a" style="left:32px;top:546.8px;width:4px;height:1px;background:#656565;"></div>
<div class="a" style="left:32px;top:575.7px;width:4px;height:1px;background:#656565;"></div>
<div class="a" style="left:32px;top:604.5px;width:4px;height:1px;background:#656565;"></div>
<div class="a" style="left:32px;top:633.3px;width:4px;height:1px;background:#656565;"></div>
<div class="a" style="left:32px;top:662.1px;width:4px;height:1px;background:#656565;"></div>
<div class="a" style="left:32px;top:690.9px;width:4px;height:1px;background:#656565;"></div>
<div class="a" style="left:36px;top:72px;width:823px;height:640px;background:#333333;"></div>
<div class="a" style="left:303px;top:187px;width:289.5px;height:411px;background:#fff;background:conic-gradient(#cdcdcd 25%,#fff 0 50%,#cdcdcd 0 75%,#fff 0) 0 0/10px 10px;"></div>
<div class="a" style="left:322.4px;top:72px;width:2px;height:115px;background:#64948e;"></div>
<div class="a" style="left:322.4px;top:598px;width:2px;height:114px;background:#64948e;"></div>
<div class="a" style="left:571.6px;top:72px;width:2px;height:115px;background:#64948e;"></div>
<div class="a" style="left:571.6px;top:598px;width:2px;height:114px;background:#64948e;"></div>
<div class="a" style="left:36px;top:209.5px;width:267px;height:2px;background:#64948e;"></div>
<div class="a" style="left:592.5px;top:209.5px;width:266.5px;height:2px;background:#64948e;"></div>
<div class="a" style="left:36px;top:574px;width:267px;height:2px;background:#64948e;"></div>
<div class="a" style="left:592.5px;top:574px;width:266.5px;height:2px;background:#64948e;"></div>
<div class="a" style="left:322.4px;top:187px;width:2px;height:411px;background:rgba(120,225,225,0.45);"></div>
<div class="a" style="left:571.6px;top:187px;width:2px;height:411px;background:rgba(120,225,225,0.45);"></div>
<div class="a" style="left:303px;top:209.5px;width:289.5px;height:2px;background:rgba(120,225,225,0.45);"></div>
<div class="a" style="left:303px;top:574px;width:289.5px;height:2px;background:rgba(120,225,225,0.45);"></div>
<div class="a" style="left:0;top:0;width:1080px;height:720px;filter:blur(0.35px)">
<div class="a" style="left:394px;top:259px;width:145px;height:202px;background:#f4f5f7;"></div>
<div class="a" style="left:394px;top:259px;width:145px;height:45px;background:#fbfbfc;"></div>
<div class="a" style="left:393.5px;top:259px;width:1.5px;height:202px;background:#c0b6aa;"></div>
<div class="a" style="left:538.5px;top:259px;width:3px;height:202px;background:#bcbcbc;"></div>
<div class="a" style="left:541.5px;top:259px;width:144.5px;height:202px;background:#ffffff;"></div>
<svg style="left:400px;top:260px" width="10" height="18" viewBox="0 0 10 18"><path d="M6 0.5 L9.2 9 L5 17.5 L1 12 Z" fill="#b4182a"/><path d="M6 0.5 L9.2 9 L5.5 8 Z" fill="#d83040"/></svg>
<div class="t" style="left:409px;top:268.3px;font-size:4.7px;color:#333;font-weight:bold;transform:scaleX(1.0);letter-spacing:0.9px;">BAWAG</div>
<div class="t" style="left:409px;top:272.6px;font-size:4.7px;color:#333;font-weight:bold;transform:scaleX(1.0);letter-spacing:0.9px;">PSK</div>
<div class="a" style="left:402px;top:281px;width:16px;height:1.0px;background:transparent;background:repeating-linear-gradient(90deg,#b6b6c0 0 3px,transparent 3px 3.8px,#b6b6c0 3.8px 4.8px,transparent 4.8px 5.6px,#b6b6c0 5.6px 8.6px,transparent 8.6px 9.6px);"></div>
<div class="a" style="left:402px;top:284px;width:22px;height:1.0px;background:transparent;background:repeating-linear-gradient(90deg,#c4c4c9 0 5px,transparent 5px 5.8px,#c4c4c9 5.8px 6.8px,transparent 6.8px 7.6px,#c4c4c9 7.6px 12.6px,transparent 12.6px 13.6px);"></div>
<div class="a" style="left:402px;top:288.6px;width:16px;height:1.0px;background:transparent;background:repeating-linear-gradient(90deg,#c9c9c9 0 2px,transparent 2px 2.8px,#c9c9c9 2.8px 4.8px,transparent 4.8px 5.6px,#c9c9c9 5.6px 8.6px,transparent 8.6px 9.6px);"></div>
<div class="a" style="left:402px;top:291.1px;width:20px;height:1.0px;background:transparent;background:repeating-linear-gradient(90deg,#a6a6a6 0 3px,transparent 3px 3.8px,#a6a6a6 3.8px 4.8px,transparent 4.8px 5.6px,#a6a6a6 5.6px 10.6px,transparent 10.6px 11.6px);"></div>
<div class="a" style="left:402px;top:293.8px;width:19px;height:1.0px;background:transparent;background:repeating-linear-gradient(90deg,#c4c4c4 0 2px,transparent 2px 2.8px,#c4c4c4 2.8px 5.8px,transparent 5.8px 6.6px,#c4c4c4 6.6px 12.6px,transparent 12.6px 13.6px);"></div>
<div class="a" style="left:402px;top:299px;width:49px;height:1.275px;background:transparent;background:repeating-linear-gradient(90deg,#515151 0 2px,transparent 2px 2.8px,#515151 2.8px 4.8px,transparent 4.8px 5.6px,#515151 5.6px 9.6px,transparent 9.6px 10.6px);"></div>
<div class="a" style="left:412px;top:299px;width:4px;height:1.275px;background:transparent;background:repeating-linear-gradient(90deg,#cecece 0 2px,transparent 2px 2.8px,#cecece 2.8px 4.8px,transparent 4.8px 5.6px,#cecece 5.6px 10.6px,transparent 10.6px 11.6px);"></div>
<div class="a" style="left:422px;top:299px;width:4px;height:1.275px;background:transparent;background:repeating-linear-gradient(90deg,#cecece 0 2px,transparent 2px 2.8px,#cecece 2.8px 4.8px,transparent 4.8px 5.6px,#cecece 5.6px 10.6px,transparent 10.6px 11.6px);"></div>
<div class="a" style="left:436px;top:299px;width:8px;height:1.275px;background:transparent;background:repeating-linear-gradient(90deg,#cecece 0 4px,transparent 4px 4.8px,#cecece 4.8px 5.8px,transparent 5.8px 6.6px,#cecece 6.6px 10.6px,transparent 10.6px 11.6px);"></div>
<div class="t" style="left:494px;top:263.6px;font-size:4.3px;color:#222;font-weight:bold;transform:scaleX(0.72);">MONTHLY STATEMENT</div>
<div class="a" style="left:503px;top:268.5px;width:27px;height:1.0px;background:transparent;background:repeating-linear-gradient(90deg,#c0c0c0 0 3px,transparent 3px 3.8px,#c0c0c0 3.8px 6.8px,transparent 6.8px 7.6px,#c0c0c0 7.6px 11.6px,transparent 11.6px 12.6px);"></div>
<div class="a" style="left:465.6px;top:275px;width:64.4px;height:63px;background:transparent;border:1px solid #8a8a8a;border-bottom:none;border-top:none;"></div>
<div class="a" style="left:466px;top:275px;width:64px;height:1.0px;background:#444;"></div>
<div class="a" style="left:468px;top:278px;width:12px;height:1.0px;background:transparent;background:repeating-linear-gradient(90deg,#b5b5b5 0 2px,transparent 2px 2.8px,#b5b5b5 2.8px 4.8px,transparent 4.8px 5.6px,#b5b5b5 5.6px 9.6px,transparent 9.6px 10.6px);"></div>
<div class="a" style="left:510px;top:278px;width:19px;height:1.0px;background:transparent;background:repeating-linear-gradient(90deg,#a0a0a0 0 4px,transparent 4px 4.8px,#a0a0a0 4.8px 7.8px,transparent 7.8px 8.6px,#a0a0a0 8.6px 14.6px,transparent 14.6px 15.6px);"></div>
<div class="a" style="left:513px;top:280.3px;width:16px;height:1.0px;background:transparent;background:repeating-linear-gradient(90deg,#bfbfbf 0 5px,transparent 5px 5.8px,#bfbfbf 5.8px 6.8px,transparent 6.8px 7.6px,#bfbfbf 7.6px 12.6px,transparent 12.6px 13.6px);"></div>
<div class="a" style="left:466px;top:284px;width:64px;height:1.0px;background:#666;"></div>
<div class="a" style="left:468px;top:286.2px;width:17px;height:1.0px;background:transparent;background:repeating-linear-gradient(90deg,#cacaca 0 3px,transparent 3px 3.8px,#cacaca 3.8px 6.8px,transparent 6.8px 7.6px,#cacaca 7.6px 12.6px,transparent 12.6px 13.6px);"></div>
<div class="a" style="left:516px;top:286.2px;width:13px;height:1.0px;background:transparent;background:repeating-linear-gradient(90deg,#cacaca 0 2px,transparent 2px 2.8px,#cacaca 2.8px 5.8px,transparent 5.8px 6.6px,#cacaca 6.6px 10.6px,transparent 10.6px 11.6px);"></div>
<div class="a" style="left:468px;top:288.5px;width:15px;height:1.0px;background:transparent;background:repeating-linear-gradient(90deg,#b5b5b5 0 2px,transparent 2px 2.8px,#b5b5b5 2.8px 4.8px,transparent 4.8px 5.6px,#b5b5b5 5.6px 10.6px,transparent 10.6px 11.6px);"></div>
<div class="a" style="left:517px;top:288.5px;width:12px;height:1.0px;background:transparent;background:repeating-linear-gradient(90deg,#b5b5b5 0 5px,transparent 5px 5.8px,#b5b5b5 5.8px 8.8px,transparent 8.8px 9.6px,#b5b5b5 9.6px 13.6px,transparent 13.6px 14.6px);"></div>
<div class="a" style="left:468px;top:290.6px;width:13px;height:1.0px;background:transparent;background:repeating-linear-gradient(90deg,#959595 0 3px,transparent 3px 3.8px,#959595 3.8px 6.8px,transparent 6.8px 7.6px,#959595 7.6px 12.6px,transparent 12.6px 13.6px);"></div>
<div class="a" style="left:518px;top:290.6px;width:11px;height:1.0px;background:transparent;background:repeating-linear-gradient(90deg,#959595 0 4px,transparent 4px 4.8px,#959595 4.8px 6.8px,transparent 6.8px 7.6px,#959595 7.6px 12.6px,transparent 12.6px 13.6px);"></div>
<div class="a" style="left:468px;top:293px;width:49px;height:1.0px;background:transparent;background:repeating-linear-gradient(90deg,#dcdcdc 0 3px,transparent 3px 3.8px,#dcdcdc 3.8px 5.8px,transparent 5.8px 6.6px,#dcdcdc 6.6px 9.6px,transparent 9.6px 10.6px);"></div>
<div class="a" style="left:466px;top:309px;width:64px;height:2px;background:#2a2a2a;"></div>
<div class="a" style="left:469px;top:312px;width:12px;height:1.02px;background:transparent;background:repeating-linear-gradient(90deg,#5a5a5a 0 3px,transparent 3px 3.8px,#5a5a5a 3.8px 4.8px,transparent 4.8px 5.6px,#5a5a5a 5.6px 8.6px,transparent 8.6px 9.6px);"></div>
<div class="a" style="left:512px;top:312px;width:17px;height:1.02px;background:transparent;background:repeating-linear-gradient(90deg,#5a5a5a 0 3px,transparent 3px 3.8px,#5a5a5a 3.8px 6.8px,transparent 6.8px 7.6px,#5a5a5a 7.6px 13.6px,transparent 13.6px 14.6px);"></div>
<div class="a" style="left:466px;top:313.6px;width:64px;height:1.4px;background:#3a2a2e;"></div>
<div class="a" style="left:466px;top:315px;width:64px;height:3.2px;background:#c89a9e;"></div>
<div class="a" style="left:469px;top:316.2px;width:41px;height:1.0px;background:transparent;background:repeating-linear-gradient(90deg,#a28488 0 2px,transparent 2px 2.8px,#a28488 2.8px 5.8px,transparent 5.8px 6.6px,#a28488 6.6px 12.6px,transparent 12.6px 13.6px);"></div>
<div class="a" style="left:469px;top:321px;width:9px;height:1.0px;background:transparent;background:repeating-linear-gradient(90deg,#bfbfbf 0 5px,transparent 5px 5.8px,#bfbfbf 5.8px 6.8px,transparent 6.8px 7.6px,#bfbfbf 7.6px 12.6px,transparent 12.6px 13.6px);"></div>
<div class="a" style="left:519px;top:321px;width:10px;height:1.0px;background:transparent;background:repeating-linear-gradient(90deg,#bfbfbf 0 4px,transparent 4px 4.8px,#bfbfbf 4.8px 6.8px,transparent 6.8px 7.6px,#bfbfbf 7.6px 11.6px,transparent 11.6px 12.6px);"></div>
<div class="a" style="left:469px;top:323.5px;width:28px;height:1.0px;background:transparent;background:repeating-linear-gradient(90deg,#b5b5b5 0 3px,transparent 3px 3.8px,#b5b5b5 3.8px 6.8px,transparent 6.8px 7.6px,#b5b5b5 7.6px 10.6px,transparent 10.6px 11.6px);"></div>
<div class="a" style="left:519px;top:323.5px;width:10px;height:1.0px;background:transparent;background:repeating-linear-gradient(90deg,#bfbfbf 0 5px,transparent 5px 5.8px,#bfbfbf 5.8px 6.8px,transparent 6.8px 7.6px,#bfbfbf 7.6px 13.6px,transparent 13.6px 14.6px);"></div>
<div class="a" style="left:469px;top:325.5px;width:21px;height:1.275px;background:transparent;background:repeating-linear-gradient(90deg,#3c3c3c 0 2px,transparent 2px 2.8px,#3c3c3c 2.8px 5.8px,transparent 5.8px 6.6px,#3c3c3c 6.6px 10.6px,transparent 10.6px 11.6px);"></div>
<div class="a" style="left:521px;top:325.5px;width:8px;height:1.0px;background:transparent;background:repeating-linear-gradient(90deg,#a0a0a0 0 4px,transparent 4px 4.8px,#a0a0a0 4.8px 7.8px,transparent 7.8px 8.6px,#a0a0a0 8.6px 13.6px,transparent 13.6px 14.6px);"></div>
<div class="a" style="left:469px;top:328px;width:26px;height:1.0px;background:transparent;background:repeating-linear-gradient(90deg,#b5b5b5 0 3px,transparent 3px 3.8px,#b5b5b5 3.8px 4.8px,transparent 4.8px 5.6px,#b5b5b5 5.6px 10.6px,transparent 10.6px 11.6px);"></div>
<div class="a" style="left:521px;top:328px;width:8px;height:1.0px;background:transparent;background:repeating-linear-gradient(90deg,#bfbfbf 0 5px,transparent 5px 5.8px,#bfbfbf 5.8px 7.8px,transparent 7.8px 8.6px,#bfbfbf 8.6px 12.6px,transparent 12.6px 13.6px);"></div>
<div class="a" style="left:469px;top:331px;width:18px;height:1.0px;background:transparent;background:repeating-linear-gradient(90deg,#bfbfbf 0 3px,transparent 3px 3.8px,#bfbfbf 3.8px 5.8px,transparent 5.8px 6.6px,#bfbfbf 6.6px 11.6px,transparent 11.6px 12.6px);"></div>
<div class="a" style="left:469px;top:333px;width:14px;height:1.275px;background:transparent;background:repeating-linear-gradient(90deg,#3c3c3c 0 3px,transparent 3px 3.8px,#3c3c3c 3.8px 6.8px,transparent 6.8px 7.6px,#3c3c3c 7.6px 12.6px,transparent 12.6px 13.6px);"></div>
<div class="a" style="left:521px;top:333px;width:8px;height:1.0px;background:transparent;background:repeating-linear-gradient(90deg,#b5b5b5 0 2px,transparent 2px 2.8px,#b5b5b5 2.8px 5.8px,transparent 5.8px 6.6px,#b5b5b5 6.6px 11.6px,transparent 11.6px 12.6px);"></div>
<div class="a" style="left:466px;top:335px;width:64px;height:2px;background:#2e2e2e;"></div>
<div class="a" style="left:469px;top:337.5px;width:21px;height:1.0px;background:transparent;background:repeating-linear-gradient(90deg,#b5b5b5 0 2px,transparent 2px 2.8px,#b5b5b5 2.8px 4.8px,transparent 4.8px 5.6px,#b5b5b5 5.6px 8.6px,transparent 8.6px 9.6px);"></div>
<div class="a" style="left:520px;top:337.5px;width:9px;height:1.0px;background:transparent;background:repeating-linear-gradient(90deg,#b5b5b5 0 3px,transparent 3px 3.8px,#b5b5b5 3.8px 6.8px,transparent 6.8px 7.6px,#b5b5b5 7.6px 13.6px,transparent 13.6px 14.6px);"></div>
<div class="a" style="left:401px;top:307px;width:57px;height:4.3px;background:#d8a4a6;"></div>
<div class="a" style="left:403px;top:308.6px;width:23px;height:1.0px;background:transparent;background:repeating-linear-gradient(90deg,#b6989c 0 5px,transparent 5px 5.8px,#b6989c 5.8px 8.8px,transparent 8.8px 9.6px,#b6989c 9.6px 15.6px,transparent 15.6px 16.6px);"></div>
<div class="a" style="left:401px;top:311.5px;width:57px;height:15px;background:#f0f0f0;border:1px solid #c8c8c8;border-top:none;"></div>
<div class="a" style="left:404px;top:313px;width:22px;height:1.0px;background:transparent;background:repeating-linear-gradient(90deg,#c9c9c9 0 5px,transparent 5px 5.8px,#c9c9c9 5.8px 8.8px,transparent 8.8px 9.6px,#c9c9c9 9.6px 12.6px,transparent 12.6px 13.6px);"></div>
<div class="a" style="left:444px;top:313px;width:13px;height:1.0px;background:transparent;background:repeating-linear-gradient(90deg,#c9c9c9 0 3px,transparent 3px 3.8px,#c9c9c9 3.8px 4.8px,transparent 4.8px 5.6px,#c9c9c9 5.6px 8.6px,transparent 8.6px 9.6px);"></div>
<div class="a" style="left:404px;top:315.5px;width:23px;height:1.0px;background:transparent;background:repeating-linear-gradient(90deg,#c9c9c9 0 4px,transparent 4px 4.8px,#c9c9c9 4.8px 7.8px,transparent 7.8px 8.6px,#c9c9c9 8.6px 11.6px,transparent 11.6px 12.6px);"></div>
<div class="a" style="left:444px;top:315.5px;width:13px;height:1.0px;background:transparent;background:repeating-linear-gradient(90deg,#c9c9c9 0 5px,transparent 5px 5.8px,#c9c9c9 5.8px 8.8px,transparent 8.8px 9.6px,#c9c9c9 9.6px 15.6px,transparent 15.6px 16.6px);"></div>
<div class="a" style="left:401px;top:317.3px;width:57px;height:1.0px;background:#d0d0d0;"></div>
<div class="a" style="left:404px;top:319px;width:14px;height:1.0px;background:transparent;background:repeating-linear-gradient(90deg,#bfbfbf 0 3px,transparent 3px 3.8px,#bfbfbf 3.8px 5.8px,transparent 5.8px 6.6px,#bfbfbf 6.6px 11.6px,transparent 11.6px 12.6px);"></div>
<div class="a" style="left:447px;top:319px;width:10px;height:1.0px;background:transparent;background:repeating-linear-gradient(90deg,#bfbfbf 0 5px,transparent 5px 5.8px,#bfbfbf 5.8px 6.8px,transparent 6.8px 7.6px,#bfbfbf 7.6px 10.6px,transparent 10.6px 11.6px);"></div>
<div class="a" style="left:404px;top:322px;width:10px;height:1.0px;background:transparent;background:repeating-linear-gradient(90deg,#bfbfbf 0 3px,transparent 3px 3.8px,#bfbfbf 3.8px 4.8px,transparent 4.8px 5.6px,#bfbfbf 5.6px 9.6px,transparent 9.6px 10.6px);"></div>
<div class="a" style="left:449px;top:322px;width:8px;height:1.0px;background:transparent;background:repeating-linear-gradient(90deg,#bfbfbf 0 4px,transparent 4px 4.8px,#bfbfbf 4.8px 5.8px,transparent 5.8px 6.6px,#bfbfbf 6.6px 11.6px,transparent 11.6px 12.6px);"></div>
<div class="a" style="left:401px;top:323.6px;width:57px;height:1.0px;background:#d0d0d0;"></div>
<div class="a" style="left:404px;top:325px;width:16px;height:1.0px;background:transparent;background:repeating-linear-gradient(90deg,#bfbfbf 0 2px,transparent 2px 2.8px,#bfbfbf 2.8px 3.8px,transparent 3.8px 4.6px,#bfbfbf 4.6px 9.6px,transparent 9.6px 10.6px);"></div>
<div class="a" style="left:452px;top:325px;width:5px;height:1.0px;background:transparent;background:repeating-linear-gradient(90deg,#bfbfbf 0 4px,transparent 4px 4.8px,#bfbfbf 4.8px 7.8px,transparent 7.8px 8.6px,#bfbfbf 8.6px 13.6px,transparent 13.6px 14.6px);"></div>
<div class="a" style="left:410px;top:349.5px;width:23px;height:1.02px;background:transparent;background:repeating-linear-gradient(90deg,#696969 0 4px,transparent 4px 4.8px,#696969 4.8px 5.8px,transparent 5.8px 6.6px,#696969 6.6px 9.6px,transparent 9.6px 10.6px);"></div>
<div class="a" style="left:433px;top:349.5px;width:97px;height:1.02px;background:transparent;background:repeating-linear-gradient(90deg,#a6a6a6 0 5px,transparent 5px 5.8px,#a6a6a6 5.8px 6.8px,transparent 6.8px 7.6px,#a6a6a6 7.6px 12.6px,transparent 12.6px 13.6px);"></div>
<div class="a" style="left:405px;top:352px;width:125px;height:1.0px;background:transparent;background:repeating-linear-gradient(90deg,#c9c9c9 0 4px,transparent 4px 4.8px,#c9c9c9 4.8px 7.8px,transparent 7.8px 8.6px,#c9c9c9 8.6px 12.6px,transparent 12.6px 13.6px);"></div>
<div class="a" style="left:399.5px;top:347px;width:2px;height:23px;background:#6a6a6a;"></div>
<div class="a" style="left:400px;top:349px;width:1px;height:2px;background:#222;"></div>
<div class="a" style="left:400px;top:366px;width:1px;height:3px;background:#222;"></div>
<div class="a" style="left:406px;top:357px;width:130px;height:3.5px;background:#b98088;"></div>
<div class="a" style="left:408px;top:358.3px;width:62px;height:1.0px;background:transparent;background:repeating-linear-gradient(90deg,#a28489 0 3px,transparent 3px 3.8px,#a28489 3.8px 6.8px,transparent 6.8px 7.6px,#a28489 7.6px 11.6px,transparent 11.6px 12.6px);"></div>
<div class="a" style="left:406px;top:360.5px;width:130px;height:31px;background:#f7f7f8;border:1px solid #8a8a8a;border-top:none;border-bottom:2px solid #8a8a8a;"></div>
<div class="a" style="left:408px;top:361.7px;width:5px;height:1.0px;background:transparent;background:repeating-linear-gradient(90deg,#b7b7b7 0 3px,transparent 3px 3.8px,#b7b7b7 3.8px 5.8px,transparent 5.8px 6.6px,#b7b7b7 6.6px 12.6px,transparent 12.6px 13.6px);"></div>
<div class="a" style="left:422px;top:361.7px;width:10px;height:1.0px;background:transparent;background:repeating-linear-gradient(90deg,#b7b7b7 0 2px,transparent 2px 2.8px,#b7b7b7 2.8px 3.8px,transparent 3.8px 4.6px,#b7b7b7 4.6px 8.6px,transparent 8.6px 9.6px);"></div>
<div class="a" style="left:476px;top:361.7px;width:8px;height:1.0px;background:transparent;background:repeating-linear-gradient(90deg,#b7b7b7 0 2px,transparent 2px 2.8px,#b7b7b7 2.8px 3.8px,transparent 3.8px 4.6px,#b7b7b7 4.6px 10.6px,transparent 10.6px 11.6px);"></div>
<div class="a" style="left:498px;top:361.7px;width:8px;height:1.0px;background:transparent;background:repeating-linear-gradient(90deg,#b7b7b7 0 4px,transparent 4px 4.8px,#b7b7b7 4.8px 6.8px,transparent 6.8px 7.6px,#b7b7b7 7.6px 11.6px,transparent 11.6px 12.6px);"></div>
<div class="a" style="left:520px;top:361.7px;width:12px;height:1.0px;background:transparent;background:repeating-linear-gradient(90deg,#b7b7b7 0 3px,transparent 3px 3.8px,#b7b7b7 3.8px 4.8px,transparent 4.8px 5.6px,#b7b7b7 5.6px 10.6px,transparent 10.6px 11.6px);"></div>
<div class="a" style="left:422px;top:364.3px;width:13px;height:1.0px;background:transparent;background:repeating-linear-gradient(90deg,#b7b7b7 0 5px,transparent 5px 5.8px,#b7b7b7 5.8px 7.8px,transparent 7.8px 8.6px,#b7b7b7 8.6px 13.6px,transparent 13.6px 14.6px);"></div>
<div class="a" style="left:477px;top:364.3px;width:7px;height:1.0px;background:transparent;background:repeating-linear-gradient(90deg,#b7b7b7 0 4px,transparent 4px 4.8px,#b7b7b7 4.8px 7.8px,transparent 7.8px 8.6px,#b7b7b7 8.6px 14.6px,transparent 14.6px 15.6px);"></div>
<div class="a" style="left:498px;top:364.3px;width:8px;height:1.0px;background:transparent;background:repeating-linear-gradient(90deg,#b7b7b7 0 5px,transparent 5px 5.8px,#b7b7b7 5.8px 6.8px,transparent 6.8px 7.6px,#b7b7b7 7.6px 10.6px,transparent 10.6px 11.6px);"></div>
<div class="a" style="left:522px;top:364.3px;width:10px;height:1.0px;background:transparent;background:repeating-linear-gradient(90deg,#b7b7b7 0 5px,transparent 5px 5.8px,#b7b7b7 5.8px 8.8px,transparent 8.8px 9.6px,#b7b7b7 9.6px 14.6px,transparent 14.6px 15.6px);"></div>
<div class="a" style="left:408px;top:367px;width:5px;height:1.0px;background:transparent;background:repeating-linear-gradient(90deg,#b7b7b7 0 3px,transparent 3px 3.8px,#b7b7b7 3.8px 5.8px,transparent 5.8px 6.6px,#b7b7b7 6.6px 10.6px,transparent 10.6px 11.6px);"></div>
<div class="a" style="left:422px;top:367px;width:17px;height:1.0px;background:transparent;background:repeating-linear-gradient(90deg,#b7b7b7 0 5px,transparent 5px 5.8px,#b7b7b7 5.8px 8.8px,transparent 8.8px 9.6px,#b7b7b7 9.6px 14.6px,transparent 14.6px 15.6px);"></div>
<div class="a" style="left:476px;top:367px;width:8px;height:1.0px;background:transparent;background:repeating-linear-gradient(90deg,#b7b7b7 0 3px,transparent 3px 3.8px,#b7b7b7 3.8px 5.8px,transparent 5.8px 6.6px,#b7b7b7 6.6px 10.6px,transparent 10.6px 11.6px);"></div>
<div class="a" style="left:494px;top:367px;width:12px;height:1.0px;background:transparent;background:repeating-linear-gradient(90deg,#b7b7b7 0 5px,transparent 5px 5.8px,#b7b7b7 5.8px 6.8px,transparent 6.8px 7.6px,#b7b7b7 7.6px 10.6px,transparent 10.6px 11.6px);"></div>
<div class="a" style="left:522px;top:367px;width:10px;height:1.0px;background:transparent;background:repeating-linear-gradient(90deg,#b7b7b7 0 3px,transparent 3px 3.8px,#b7b7b7 3.8px 5.8px,transparent 5.8px 6.6px,#b7b7b7 6.6px 9.6px,transparent 9.6px 10.6px);"></div>
<div class="a" style="left:406.5px;top:391.5px;width:63.5px;height:4.5px;background:#d4a2a4;"></div>
<div class="a" style="left:408px;top:393px;width:32px;height:1.0px;background:transparent;background:repeating-linear-gradient(90deg,#b6989c 0 3px,transparent 3px 3.8px,#b6989c 3.8px 5.8px,transparent 5.8px 6.6px,#b6989c 6.6px 10.6px,transparent 10.6px 11.6px);"></div>
<div class="a" style="left:406.5px;top:396px;width:63.5px;height:19.5px;background:#f8f8f8;border:1px solid #666;border-top:none;"></div>
<div class="a" style="left:408px;top:397.3px;width:13px;height:1.105px;background:transparent;background:repeating-linear-gradient(90deg,#4b4b4b 0 5px,transparent 5px 5.8px,#4b4b4b 5.8px 7.8px,transparent 7.8px 8.6px,#4b4b4b 8.6px 11.6px,transparent 11.6px 12.6px);"></div>
<div class="a" style="left:434px;top:397.3px;width:14px;height:1.105px;background:transparent;background:repeating-linear-gradient(90deg,#4b4b4b 0 3px,transparent 3px 3.8px,#4b4b4b 3.8px 6.8px,transparent 6.8px 7.6px,#4b4b4b 7.6px 10.6px,transparent 10.6px 11.6px);"></div>
<div class="a" style="left:453px;top:397.3px;width:15px;height:1.105px;background:transparent;background:repeating-linear-gradient(90deg,#4b4b4b 0 3px,transparent 3px 3.8px,#4b4b4b 3.8px 4.8px,transparent 4.8px 5.6px,#4b4b4b 5.6px 10.6px,transparent 10.6px 11.6px);"></div>
<div class="a" style="left:406.5px;top:399px;width:63.5px;height:1.0px;background:#777;"></div>
<div class="a" style="left:408px;top:400.5px;width:20px;height:1.0px;background:transparent;background:repeating-linear-gradient(90deg,#c0c0c0 0 4px,transparent 4px 4.8px,#c0c0c0 4.8px 5.8px,transparent 5.8px 6.6px,#c0c0c0 6.6px 12.6px,transparent 12.6px 13.6px);"></div>
<div class="a" style="left:437px;top:400.5px;width:12px;height:1.0px;background:transparent;background:repeating-linear-gradient(90deg,#cacaca 0 4px,transparent 4px 4.8px,#cacaca 4.8px 7.8px,transparent 7.8px 8.6px,#cacaca 8.6px 11.6px,transparent 11.6px 12.6px);"></div>
<div class="a" style="left:456px;top:400.5px;width:12px;height:1.0px;background:transparent;background:repeating-linear-gradient(90deg,#cacaca 0 2px,transparent 2px 2.8px,#cacaca 2.8px 3.8px,transparent 3.8px 4.6px,#cacaca 4.6px 8.6px,transparent 8.6px 9.6px);"></div>
<div class="a" style="left:408px;top:403.5px;width:20px;height:1.0px;background:transparent;background:repeating-linear-gradient(90deg,#c0c0c0 0 5px,transparent 5px 5.8px,#c0c0c0 5.8px 8.8px,transparent 8.8px 9.6px,#c0c0c0 9.6px 12.6px,transparent 12.6px 13.6px);"></div>
<div class="a" style="left:437px;top:403.5px;width:12px;height:1.0px;background:transparent;background:repeating-linear-gradient(90deg,#cacaca 0 4px,transparent 4px 4.8px,#cacaca 4.8px 5.8px,transparent 5.8px 6.6px,#cacaca 6.6px 9.6px,transparent 9.6px 10.6px);"></div>
<div class="a" style="left:456px;top:403.5px;width:12px;height:1.0px;background:transparent;background:repeating-linear-gradient(90deg,#cacaca 0 4px,transparent 4px 4.8px,#cacaca 4.8px 7.8px,transparent 7.8px 8.6px,#cacaca 8.6px 11.6px,transparent 11.6px 12.6px);"></div>
<div class="a" style="left:408px;top:406.5px;width:20px;height:1.0px;background:transparent;background:repeating-linear-gradient(90deg,#c0c0c0 0 3px,transparent 3px 3.8px,#c0c0c0 3.8px 4.8px,transparent 4.8px 5.6px,#c0c0c0 5.6px 9.6px,transparent 9.6px 10.6px);"></div>
<div class="a" style="left:437px;top:406.5px;width:12px;height:1.0px;background:transparent;background:repeating-linear-gradient(90deg,#cacaca 0 2px,transparent 2px 2.8px,#cacaca 2.8px 4.8px,transparent 4.8px 5.6px,#cacaca 5.6px 10.6px,transparent 10.6px 11.6px);"></div>
<div class="a" style="left:456px;top:406.5px;width:12px;height:1.0px;background:transparent;background:repeating-linear-gradient(90deg,#cacaca 0 5px,transparent 5px 5.8px,#cacaca 5.8px 7.8px,transparent 7.8px 8.6px,#cacaca 8.6px 11.6px,transparent 11.6px 12.6px);"></div>
<div class="a" style="left:408px;top:409.5px;width:20px;height:1.0px;background:transparent;background:repeating-linear-gradient(90deg,#c0c0c0 0 5px,transparent 5px 5.8px,#c0c0c0 5.8px 8.8px,transparent 8.8px 9.6px,#c0c0c0 9.6px 12.6px,transparent 12.6px 13.6px);"></div>
<div class="a" style="left:437px;top:409.5px;width:12px;height:1.0px;background:transparent;background:repeating-linear-gradient(90deg,#cacaca 0 2px,transparent 2px 2.8px,#cacaca 2.8px 5.8px,transparent 5.8px 6.6px,#cacaca 6.6px 10.6px,transparent 10.6px 11.6px);"></div>
<div class="a" style="left:456px;top:409.5px;width:12px;height:1.0px;background:transparent;background:repeating-linear-gradient(90deg,#cacaca 0 2px,transparent 2px 2.8px,#cacaca 2.8px 3.8px,transparent 3.8px 4.6px,#cacaca 4.6px 10.6px,transparent 10.6px 11.6px);"></div>
<div class="a" style="left:408px;top:412.5px;width:20px;height:1.0px;background:transparent;background:repeating-linear-gradient(90deg,#c0c0c0 0 5px,transparent 5px 5.8px,#c0c0c0 5.8px 7.8px,transparent 7.8px 8.6px,#c0c0c0 8.6px 12.6px,transparent 12.6px 13.6px);"></div>
<div class="a" style="left:437px;top:412.5px;width:12px;height:1.0px;background:transparent;background:repeating-linear-gradient(90deg,#cacaca 0 3px,transparent 3px 3.8px,#cacaca 3.8px 5.8px,transparent 5.8px 6.6px,#cacaca 6.6px 12.6px,transparent 12.6px 13.6px);"></div>
<div class="a" style="left:456px;top:412.5px;width:12px;height:1.0px;background:transparent;background:repeating-linear-gradient(90deg,#cacaca 0 3px,transparent 3px 3.8px,#cacaca 3.8px 6.8px,transparent 6.8px 7.6px,#cacaca 7.6px 13.6px,transparent 13.6px 14.6px);"></div>
<div class="a" style="left:406.5px;top:411.2px;width:63.5px;height:1.0px;background:#999;"></div>
<div class="a" style="left:432px;top:396px;width:1.2px;height:19.5px;background:#333;"></div>
<div class="a" style="left:451px;top:396px;width:1.2px;height:19.5px;background:#333;"></div>
<div class="a" style="left:472px;top:391.5px;width:64px;height:1.5px;background:#222;"></div>
<div class="a" style="left:472.5px;top:393px;width:63px;height:35px;background:#f0f0f0;"></div>
<div class="a" style="left:473px;top:394.6px;width:62px;height:1.105px;background:transparent;background:repeating-linear-gradient(90deg,#787878 0 4px,transparent 4px 4.8px,#787878 4.8px 6.8px,transparent 6.8px 7.6px,#787878 7.6px 10.6px,transparent 10.6px 11.6px);"></div>
<div class="a" style="left:473px;top:396.6px;width:62px;height:1.105px;background:transparent;background:repeating-linear-gradient(90deg,#787878 0 5px,transparent 5px 5.8px,#787878 5.8px 7.8px,transparent 7.8px 8.6px,#787878 8.6px 11.6px,transparent 11.6px 12.6px);"></div>
<div class="a" style="left:473px;top:398.6px;width:62px;height:1.105px;background:transparent;background:repeating-linear-gradient(90deg,#787878 0 5px,transparent 5px 5.8px,#787878 5.8px 7.8px,transparent 7.8px 8.6px,#787878 8.6px 12.6px,transparent 12.6px 13.6px);"></div>
<div class="a" style="left:473px;top:400.6px;width:37px;height:1.105px;background:transparent;background:repeating-linear-gradient(90deg,#787878 0 5px,transparent 5px 5.8px,#787878 5.8px 8.8px,transparent 8.8px 9.6px,#787878 9.6px 12.6px,transparent 12.6px 13.6px);"></div>
<div class="a" style="left:472.5px;top:402.5px;width:63px;height:9px;background:#a8a8a8;"></div>
<div class="a" style="left:472.5px;top:403.0px;width:63.0px;height:1.19px;background:transparent;background:repeating-linear-gradient(90deg,#434343 0 5px,transparent 5px 5.8px,#434343 5.8px 8.8px,transparent 8.8px 9.6px,#434343 9.6px 12.6px,transparent 12.6px 13.6px);"></div>
<div class="a" style="left:472.5px;top:405.1px;width:63.0px;height:1.19px;background:transparent;background:repeating-linear-gradient(90deg,#434343 0 5px,transparent 5px 5.8px,#434343 5.8px 6.8px,transparent 6.8px 7.6px,#434343 7.6px 11.6px,transparent 11.6px 12.6px);"></div>
<div class="a" style="left:472.5px;top:407.2px;width:63.0px;height:1.19px;background:transparent;background:repeating-linear-gradient(90deg,#434343 0 4px,transparent 4px 4.8px,#434343 4.8px 5.8px,transparent 5.8px 6.6px,#434343 6.6px 11.6px,transparent 11.6px 12.6px);"></div>
<div class="a" style="left:472.5px;top:409.3px;width:63.0px;height:1.19px;background:transparent;background:repeating-linear-gradient(90deg,#434343 0 5px,transparent 5px 5.8px,#434343 5.8px 7.8px,transparent 7.8px 8.6px,#434343 8.6px 14.6px,transparent 14.6px 15.6px);"></div>
<div class="a" style="left:472.5px;top:412.0px;width:63.0px;height:1.105px;background:transparent;background:repeating-linear-gradient(90deg,#515151 0 5px,transparent 5px 5.8px,#515151 5.8px 8.8px,transparent 8.8px 9.6px,#515151 9.6px 13.6px,transparent 13.6px 14.6px);"></div>
<div class="a" style="left:472.5px;top:413.9px;width:63.0px;height:1.105px;background:transparent;background:repeating-linear-gradient(90deg,#515151 0 4px,transparent 4px 4.8px,#515151 4.8px 6.8px,transparent 6.8px 7.6px,#515151 7.6px 11.6px,transparent 11.6px 12.6px);"></div>
<div class="a" style="left:472.5px;top:415.9px;width:63.0px;height:1.105px;background:transparent;background:repeating-linear-gradient(90deg,#515151 0 4px,transparent 4px 4.8px,#515151 4.8px 7.8px,transparent 7.8px 8.6px,#515151 8.6px 12.6px,transparent 12.6px 13.6px);"></div>
<div class="a" style="left:472.5px;top:417.9px;width:45.5px;height:1.105px;background:transparent;background:repeating-linear-gradient(90deg,#515151 0 3px,transparent 3px 3.8px,#515151 3.8px 5.8px,transparent 5.8px 6.6px,#515151 6.6px 12.6px,transparent 12.6px 13.6px);"></div>
<div class="a" style="left:472.5px;top:419.8px;width:63.0px;height:1.105px;background:transparent;background:repeating-linear-gradient(90deg,#515151 0 4px,transparent 4px 4.8px,#515151 4.8px 5.8px,transparent 5.8px 6.6px,#515151 6.6px 10.6px,transparent 10.6px 11.6px);"></div>
<div class="a" style="left:472.5px;top:421.8px;width:63.0px;height:1.105px;background:transparent;background:repeating-linear-gradient(90deg,#515151 0 3px,transparent 3px 3.8px,#515151 3.8px 6.8px,transparent 6.8px 7.6px,#515151 7.6px 11.6px,transparent 11.6px 12.6px);"></div>
<div class="a" style="left:472.5px;top:423.7px;width:63.0px;height:1.105px;background:transparent;background:repeating-linear-gradient(90deg,#515151 0 4px,transparent 4px 4.8px,#515151 4.8px 6.8px,transparent 6.8px 7.6px,#515151 7.6px 12.6px,transparent 12.6px 13.6px);"></div>
<div class="a" style="left:472.5px;top:425.6px;width:45.5px;height:1.105px;background:transparent;background:repeating-linear-gradient(90deg,#515151 0 3px,transparent 3px 3.8px,#515151 3.8px 6.8px,transparent 6.8px 7.6px,#515151 7.6px 10.6px,transparent 10.6px 11.6px);"></div>
<div class="a" style="left:472px;top:427.3px;width:64px;height:1.8px;background:#111;"></div>
<div class="a" style="left:418px;top:432px;width:97px;height:1.0px;background:#dcdcdc;"></div>
<div class="a" style="left:404px;top:435px;width:130px;height:16px;background:transparent;border:1px solid #6a6a6a;"></div>
<div class="a" style="left:412px;top:439px;width:23px;height:1.0px;background:transparent;background:repeating-linear-gradient(90deg,#aaaaaa 0 5px,transparent 5px 5.8px,#aaaaaa 5.8px 6.8px,transparent 6.8px 7.6px,#aaaaaa 7.6px 10.6px,transparent 10.6px 11.6px);"></div>
<div class="a" style="left:412px;top:442.5px;width:108px;height:1.0px;background:transparent;background:repeating-linear-gradient(90deg,#bfbfbf 0 2px,transparent 2px 2.8px,#bfbfbf 2.8px 3.8px,transparent 3.8px 4.6px,#bfbfbf 4.6px 7.6px,transparent 7.6px 8.6px);"></div>
<div class="a" style="left:412px;top:444.7px;width:13px;height:1.0px;background:transparent;background:repeating-linear-gradient(90deg,#cacaca 0 2px,transparent 2px 2.8px,#cacaca 2.8px 3.8px,transparent 3.8px 4.6px,#cacaca 4.6px 9.6px,transparent 9.6px 10.6px);"></div>
<div class="a" style="left:548.7px;top:272.6px;width:17.6px;height:1.0px;background:transparent;background:repeating-linear-gradient(90deg,#aaaaaa 0 4px,transparent 4px 4.8px,#aaaaaa 4.8px 6.8px,transparent 6.8px 7.6px,#aaaaaa 7.6px 13.6px,transparent 13.6px 14.6px);"></div>
<div class="a" style="left:548.7px;top:275.2px;width:18.3px;height:1.0px;background:transparent;background:repeating-linear-gradient(90deg,#b5b5b5 0 5px,transparent 5px 5.8px,#b5b5b5 5.8px 6.8px,transparent 6.8px 7.6px,#b5b5b5 7.6px 12.6px,transparent 12.6px 13.6px);"></div>
<div class="a" style="left:548.7px;top:278px;width:18.3px;height:1.0px;background:transparent;background:repeating-linear-gradient(90deg,#bfbfbf 0 5px,transparent 5px 5.8px,#bfbfbf 5.8px 7.8px,transparent 7.8px 8.6px,#bfbfbf 8.6px 12.6px,transparent 12.6px 13.6px);"></div>
<div class="a" style="left:582.3px;top:272.6px;width:24.5px;height:1.02px;background:transparent;background:repeating-linear-gradient(90deg,#5a5a5a 0 4px,transparent 4px 4.8px,#5a5a5a 4.8px 5.8px,transparent 5.8px 6.6px,#5a5a5a 6.6px 10.6px,transparent 10.6px 11.6px);"></div>
<div class="a" style="left:582px;top:275.2px;width:20px;height:1.0px;background:transparent;background:repeating-linear-gradient(90deg,#cacaca 0 3px,transparent 3px 3.8px,#cacaca 3.8px 5.8px,transparent 5.8px 6.6px,#cacaca 6.6px 12.6px,transparent 12.6px 13.6px);"></div>
<div class="a" style="left:582px;top:278px;width:19px;height:1.0px;background:transparent;background:repeating-linear-gradient(90deg,#cacaca 0 4px,transparent 4px 4.8px,#cacaca 4.8px 5.8px,transparent 5.8px 6.6px,#cacaca 6.6px 9.6px,transparent 9.6px 10.6px);"></div>
<div class="a" style="left:548.7px;top:285px;width:22.3px;height:1.0px;background:transparent;background:repeating-linear-gradient(90deg,#b5b5b5 0 4px,transparent 4px 4.8px,#b5b5b5 4.8px 6.8px,transparent 6.8px 7.6px,#b5b5b5 7.6px 12.6px,transparent 12.6px 13.6px);"></div>
<div class="a" style="left:548.7px;top:287.4px;width:24.3px;height:1.0px;background:transparent;background:repeating-linear-gradient(90deg,#cacaca 0 3px,transparent 3px 3.8px,#cacaca 3.8px 6.8px,transparent 6.8px 7.6px,#cacaca 7.6px 11.6px,transparent 11.6px 12.6px);"></div>
<div class="a" style="left:624.3px;top:269px;width:52px;height:23.5px;background:#fdf6f6;border:1px solid #b88;"></div>
<div class="a" style="left:624.3px;top:269px;width:52px;height:3.2px;background:#d89a9c;"></div>
<div class="a" style="left:640px;top:270.3px;width:20px;height:1.0px;background:transparent;background:repeating-linear-gradient(90deg,#ac888d 0 4px,transparent 4px 4.8px,#ac888d 4.8px 6.8px,transparent 6.8px 7.6px,#ac888d 7.6px 10.6px,transparent 10.6px 11.6px);"></div>
<div class="a" style="left:626px;top:273.7px;width:16px;height:1.0px;background:transparent;background:repeating-linear-gradient(90deg,#959595 0 2px,transparent 2px 2.8px,#959595 2.8px 4.8px,transparent 4.8px 5.6px,#959595 5.6px 11.6px,transparent 11.6px 12.6px);"></div>
<div class="a" style="left:664.8px;top:273.7px;width:10.7px;height:1.0px;background:transparent;background:repeating-linear-gradient(90deg,#aaaaaa 0 2px,transparent 2px 2.8px,#aaaaaa 2.8px 3.8px,transparent 3.8px 4.6px,#aaaaaa 4.6px 10.6px,transparent 10.6px 11.6px);"></div>
<div class="a" style="left:626px;top:276.7px;width:42px;height:1.0px;background:transparent;background:repeating-linear-gradient(90deg,#dcdcdc 0 2px,transparent 2px 2.8px,#dcdcdc 2.8px 4.8px,transparent 4.8px 5.6px,#dcdcdc 5.6px 8.6px,transparent 8.6px 9.6px);"></div>
<div class="a" style="left:626px;top:278px;width:34px;height:1.0px;background:transparent;background:repeating-linear-gradient(90deg,#e1e1e1 0 3px,transparent 3px 3.8px,#e1e1e1 3.8px 5.8px,transparent 5.8px 6.6px,#e1e1e1 6.6px 10.6px,transparent 10.6px 11.6px);"></div>
<div class="a" style="left:626px;top:282px;width:34px;height:1.0px;background:transparent;background:repeating-linear-gradient(90deg,#a0a0a0 0 2px,transparent 2px 2.8px,#a0a0a0 2.8px 5.8px,transparent 5.8px 6.6px,#a0a0a0 6.6px 11.6px,transparent 11.6px 12.6px);"></div>
<div class="a" style="left:626px;top:284.8px;width:16px;height:1.02px;background:transparent;background:repeating-linear-gradient(90deg,#4b4b4b 0 4px,transparent 4px 4.8px,#4b4b4b 4.8px 5.8px,transparent 5.8px 6.6px,#4b4b4b 6.6px 11.6px,transparent 11.6px 12.6px);"></div>
<div class="a" style="left:659px;top:284.8px;width:3px;height:1.02px;background:transparent;background:repeating-linear-gradient(90deg,#4b4b4b 0 2px,transparent 2px 2.8px,#4b4b4b 2.8px 3.8px,transparent 3.8px 4.6px,#4b4b4b 4.6px 10.6px,transparent 10.6px 11.6px);"></div>
<div class="a" style="left:626px;top:287.9px;width:14px;height:1.02px;background:transparent;background:repeating-linear-gradient(90deg,#4b4b4b 0 3px,transparent 3px 3.8px,#4b4b4b 3.8px 4.8px,transparent 4.8px 5.6px,#4b4b4b 5.6px 9.6px,transparent 9.6px 10.6px);"></div>
<div class="a" style="left:659px;top:287.9px;width:3px;height:1.02px;background:transparent;background:repeating-linear-gradient(90deg,#4b4b4b 0 2px,transparent 2px 2.8px,#4b4b4b 2.8px 5.8px,transparent 5.8px 6.6px,#4b4b4b 6.6px 9.6px,transparent 9.6px 10.6px);"></div>
<div class="a" style="left:624.3px;top:290px;width:52px;height:2.5px;background:#e0b0b2;"></div>
<div class="a" style="left:626px;top:291px;width:24px;height:1.0px;background:transparent;background:repeating-linear-gradient(90deg,#b6a2a2 0 2px,transparent 2px 2.8px,#b6a2a2 2.8px 5.8px,transparent 5.8px 6.6px,#b6a2a2 6.6px 9.6px,transparent 9.6px 10.6px);"></div>
<div class="a" style="left:548.7px;top:303px;width:42.8px;height:1.0px;background:transparent;background:repeating-linear-gradient(90deg,#bfbfbf 0 3px,transparent 3px 3.8px,#bfbfbf 3.8px 5.8px,transparent 5.8px 6.6px,#bfbfbf 6.6px 9.6px,transparent 9.6px 10.6px);"></div>
<div class="a" style="left:548.4px;top:310px;width:4.8px;height:4.8px;background:transparent;border:1px solid #111;"></div>
<div class="a" style="left:555px;top:311.5px;width:36.5px;height:1.02px;background:transparent;background:repeating-linear-gradient(90deg,#696969 0 5px,transparent 5px 5.8px,#696969 5.8px 6.8px,transparent 6.8px 7.6px,#696969 7.6px 13.6px,transparent 13.6px 14.6px);"></div>
<div class="a" style="left:555px;top:313.2px;width:36.5px;height:1.0px;background:transparent;background:repeating-linear-gradient(90deg,#d4d4d4 0 4px,transparent 4px 4.8px,#d4d4d4 4.8px 6.8px,transparent 6.8px 7.6px,#d4d4d4 7.6px 11.6px,transparent 11.6px 12.6px);"></div>
<div class="a" style="left:548.7px;top:319.2px;width:18.3px;height:1.0px;background:transparent;background:repeating-linear-gradient(90deg,#bfbfbf 0 3px,transparent 3px 3.8px,#bfbfbf 3.8px 4.8px,transparent 4.8px 5.6px,#bfbfbf 5.6px 11.6px,transparent 11.6px 12.6px);"></div>
<div class="a" style="left:548.7px;top:321.8px;width:16.3px;height:1.0px;background:transparent;background:repeating-linear-gradient(90deg,#a0a0a0 0 5px,transparent 5px 5.8px,#a0a0a0 5.8px 8.8px,transparent 8.8px 9.6px,#a0a0a0 9.6px 14.6px,transparent 14.6px 15.6px);"></div>
<div class="a" style="left:548.7px;top:324.4px;width:22.3px;height:1.0px;background:transparent;background:repeating-linear-gradient(90deg,#bfbfbf 0 5px,transparent 5px 5.8px,#bfbfbf 5.8px 6.8px,transparent 6.8px 7.6px,#bfbfbf 7.6px 12.6px,transparent 12.6px 13.6px);"></div>
<div class="a" style="left:548px;top:330px;width:6px;height:1.53px;background:transparent;background:repeating-linear-gradient(90deg,#3c3c3c 0 4px,transparent 4px 4.8px,#3c3c3c 4.8px 7.8px,transparent 7.8px 8.6px,#3c3c3c 8.6px 14.6px,transparent 14.6px 15.6px);"></div>
<div class="a" style="left:563px;top:330px;width:11.7px;height:1.53px;background:transparent;background:repeating-linear-gradient(90deg,#4b4b4b 0 4px,transparent 4px 4.8px,#4b4b4b 4.8px 7.8px,transparent 7.8px 8.6px,#4b4b4b 8.6px 14.6px,transparent 14.6px 15.6px);"></div>
<div class="a" style="left:583.9px;top:330px;width:12.1px;height:1.53px;background:transparent;background:repeating-linear-gradient(90deg,#3c3c3c 0 4px,transparent 4px 4.8px,#3c3c3c 4.8px 5.8px,transparent 5.8px 6.6px,#3c3c3c 6.6px 9.6px,transparent 9.6px 10.6px);"></div>
<div class="a" style="left:580.8px;top:338.9px;width:58.0px;height:1.0px;background:transparent;background:repeating-linear-gradient(90deg,#cacaca 0 3px,transparent 3px 3.8px,#cacaca 3.8px 5.8px,transparent 5.8px 6.6px,#cacaca 6.6px 12.6px,transparent 12.6px 13.6px);"></div>
<div class="t" style="left:593px;top:348.4px;font-size:4.3px;color:#222;font-weight:bold;transform:scaleX(0.62);">IMPORTANT INFORMATION</div>
<div class="a" style="left:549px;top:357.5px;width:127.5px;height:1.0px;background:transparent;background:repeating-linear-gradient(90deg,#c6c6c6 0 4px,transparent 4px 4.8px,#c6c6c6 4.8px 7.8px,transparent 7.8px 8.6px,#c6c6c6 8.6px 11.6px,transparent 11.6px 12.6px);"></div>
<div class="a" style="left:549px;top:359.8px;width:127.5px;height:1.0px;background:transparent;background:repeating-linear-gradient(90deg,#c6c6c6 0 5px,transparent 5px 5.8px,#c6c6c6 5.8px 8.8px,transparent 8.8px 9.6px,#c6c6c6 9.6px 13.6px,transparent 13.6px 14.6px);"></div>
<div class="a" style="left:549px;top:362.4px;width:39px;height:1.0px;background:transparent;background:repeating-linear-gradient(90deg,#c6c6c6 0 3px,transparent 3px 3.8px,#c6c6c6 3.8px 6.8px,transparent 6.8px 7.6px,#c6c6c6 7.6px 13.6px,transparent 13.6px 14.6px);"></div>
<div class="a" style="left:549px;top:365.5px;width:107px;height:1.0px;background:transparent;background:repeating-linear-gradient(90deg,#c6c6c6 0 2px,transparent 2px 2.8px,#c6c6c6 2.8px 4.8px,transparent 4.8px 5.6px,#c6c6c6 5.6px 9.6px,transparent 9.6px 10.6px);"></div>
<div class="a" style="left:549px;top:367.6px;width:107px;height:1.0px;background:transparent;background:repeating-linear-gradient(90deg,#c6c6c6 0 2px,transparent 2px 2.8px,#c6c6c6 2.8px 3.8px,transparent 3.8px 4.6px,#c6c6c6 4.6px 9.6px,transparent 9.6px 10.6px);"></div>
<div class="a" style="left:549px;top:371px;width:88px;height:1.0px;background:transparent;background:repeating-linear-gradient(90deg,#c6c6c6 0 2px,transparent 2px 2.8px,#c6c6c6 2.8px 4.8px,transparent 4.8px 5.6px,#c6c6c6 5.6px 11.6px,transparent 11.6px 12.6px);"></div>
<div class="a" style="left:549px;top:373.1px;width:88px;height:1.0px;background:transparent;background:repeating-linear-gradient(90deg,#c6c6c6 0 3px,transparent 3px 3.8px,#c6c6c6 3.8px 5.8px,transparent 5.8px 6.6px,#c6c6c6 6.6px 12.6px,transparent 12.6px 13.6px);"></div>
<div class="a" style="left:549px;top:377.1px;width:127.5px;height:1.0px;background:transparent;background:repeating-linear-gradient(90deg,#c6c6c6 0 3px,transparent 3px 3.8px,#c6c6c6 3.8px 6.8px,transparent 6.8px 7.6px,#c6c6c6 7.6px 12.6px,transparent 12.6px 13.6px);"></div>
<div class="a" style="left:549px;top:379.2px;width:127.5px;height:1.0px;background:transparent;background:repeating-linear-gradient(90deg,#c6c6c6 0 3px,transparent 3px 3.8px,#c6c6c6 3.8px 6.8px,transparent 6.8px 7.6px,#c6c6c6 7.6px 11.6px,transparent 11.6px 12.6px);"></div>
<div class="a" style="left:549px;top:381.5px;width:54px;height:1.0px;background:transparent;background:repeating-linear-gradient(90deg,#c6c6c6 0 3px,transparent 3px 3.8px,#c6c6c6 3.8px 4.8px,transparent 4.8px 5.6px,#c6c6c6 5.6px 10.6px,transparent 10.6px 11.6px);"></div>
<div class="a" style="left:549px;top:385.3px;width:127.5px;height:1.0px;background:transparent;background:repeating-linear-gradient(90deg,#c6c6c6 0 4px,transparent 4px 4.8px,#c6c6c6 4.8px 7.8px,transparent 7.8px 8.6px,#c6c6c6 8.6px 14.6px,transparent 14.6px 15.6px);"></div>
<div class="a" style="left:549px;top:387.5px;width:127.5px;height:1.0px;background:transparent;background:repeating-linear-gradient(90deg,#c6c6c6 0 2px,transparent 2px 2.8px,#c6c6c6 2.8px 3.8px,transparent 3.8px 4.6px,#c6c6c6 4.6px 9.6px,transparent 9.6px 10.6px);"></div>
<div class="a" style="left:549px;top:389.8px;width:127.5px;height:1.0px;background:transparent;background:repeating-linear-gradient(90deg,#c6c6c6 0 2px,transparent 2px 2.8px,#c6c6c6 2.8px 3.8px,transparent 3.8px 4.6px,#c6c6c6 4.6px 10.6px,transparent 10.6px 11.6px);"></div>
<div class="a" style="left:549px;top:391.9px;width:106px;height:1.0px;background:transparent;background:repeating-linear-gradient(90deg,#c6c6c6 0 3px,transparent 3px 3.8px,#c6c6c6 3.8px 5.8px,transparent 5.8px 6.6px,#c6c6c6 6.6px 9.6px,transparent 9.6px 10.6px);"></div>
<div class="a" style="left:549px;top:395px;width:127.5px;height:1.0px;background:transparent;background:repeating-linear-gradient(90deg,#c6c6c6 0 2px,transparent 2px 2.8px,#c6c6c6 2.8px 3.8px,transparent 3.8px 4.6px,#c6c6c6 4.6px 8.6px,transparent 8.6px 9.6px);"></div>
<div class="a" style="left:549px;top:397.1px;width:127.5px;height:1.0px;background:transparent;background:repeating-linear-gradient(90deg,#c6c6c6 0 3px,transparent 3px 3.8px,#c6c6c6 3.8px 4.8px,transparent 4.8px 5.6px,#c6c6c6 5.6px 11.6px,transparent 11.6px 12.6px);"></div>
<div class="a" style="left:549px;top:399.2px;width:127.5px;height:1.0px;background:transparent;background:repeating-linear-gradient(90deg,#c6c6c6 0 5px,transparent 5px 5.8px,#c6c6c6 5.8px 7.8px,transparent 7.8px 8.6px,#c6c6c6 8.6px 14.6px,transparent 14.6px 15.6px);"></div>
<div class="a" style="left:549px;top:401.4px;width:64px;height:1.0px;background:transparent;background:repeating-linear-gradient(90deg,#c6c6c6 0 3px,transparent 3px 3.8px,#c6c6c6 3.8px 5.8px,transparent 5.8px 6.6px,#c6c6c6 6.6px 10.6px,transparent 10.6px 11.6px);"></div>
<div class="a" style="left:549px;top:404.9px;width:127.5px;height:1.0px;background:transparent;background:repeating-linear-gradient(90deg,#c6c6c6 0 4px,transparent 4px 4.8px,#c6c6c6 4.8px 6.8px,transparent 6.8px 7.6px,#c6c6c6 7.6px 10.6px,transparent 10.6px 11.6px);"></div>
<div class="a" style="left:549px;top:407px;width:127.5px;height:1.0px;background:transparent;background:repeating-linear-gradient(90deg,#c6c6c6 0 5px,transparent 5px 5.8px,#c6c6c6 5.8px 6.8px,transparent 6.8px 7.6px,#c6c6c6 7.6px 11.6px,transparent 11.6px 12.6px);"></div>
<div class="a" style="left:549px;top:409.6px;width:66px;height:1.0px;background:transparent;background:repeating-linear-gradient(90deg,#c6c6c6 0 2px,transparent 2px 2.8px,#c6c6c6 2.8px 3.8px,transparent 3.8px 4.6px,#c6c6c6 4.6px 9.6px,transparent 9.6px 10.6px);"></div>
<div class="a" style="left:549px;top:357.5px;width:11px;height:1.0px;background:transparent;background:repeating-linear-gradient(90deg,#959595 0 3px,transparent 3px 3.8px,#959595 3.8px 5.8px,transparent 5.8px 6.6px,#959595 6.6px 11.6px,transparent 11.6px 12.6px);"></div>
<div class="a" style="left:549px;top:365.5px;width:11px;height:1.0px;background:transparent;background:repeating-linear-gradient(90deg,#959595 0 3px,transparent 3px 3.8px,#959595 3.8px 6.8px,transparent 6.8px 7.6px,#959595 7.6px 10.6px,transparent 10.6px 11.6px);"></div>
<div class="a" style="left:549px;top:371px;width:11px;height:1.0px;background:transparent;background:repeating-linear-gradient(90deg,#959595 0 5px,transparent 5px 5.8px,#959595 5.8px 7.8px,transparent 7.8px 8.6px,#959595 8.6px 14.6px,transparent 14.6px 15.6px);"></div>
<div class="a" style="left:549px;top:377.1px;width:11px;height:1.0px;background:transparent;background:repeating-linear-gradient(90deg,#959595 0 2px,transparent 2px 2.8px,#959595 2.8px 3.8px,transparent 3.8px 4.6px,#959595 4.6px 10.6px,transparent 10.6px 11.6px);"></div>
<div class="a" style="left:549px;top:385.3px;width:11px;height:1.0px;background:transparent;background:repeating-linear-gradient(90deg,#959595 0 2px,transparent 2px 2.8px,#959595 2.8px 3.8px,transparent 3.8px 4.6px,#959595 4.6px 7.6px,transparent 7.6px 8.6px);"></div>
<div class="a" style="left:549px;top:395px;width:11px;height:1.0px;background:transparent;background:repeating-linear-gradient(90deg,#959595 0 3px,transparent 3px 3.8px,#959595 3.8px 4.8px,transparent 4.8px 5.6px,#959595 5.6px 11.6px,transparent 11.6px 12.6px);"></div>
<div class="a" style="left:549px;top:404.9px;width:11px;height:1.0px;background:transparent;background:repeating-linear-gradient(90deg,#959595 0 3px,transparent 3px 3.8px,#959595 3.8px 5.8px,transparent 5.8px 6.6px,#959595 6.6px 11.6px,transparent 11.6px 12.6px);"></div>
<div class="a" style="left:576px;top:410.3px;width:39px;height:1.02px;background:transparent;background:repeating-linear-gradient(90deg,#4b4b4b 0 5px,transparent 5px 5.8px,#4b4b4b 5.8px 8.8px,transparent 8.8px 9.6px,#4b4b4b 9.6px 15.6px,transparent 15.6px 16.6px);"></div>
<div class="a" style="left:549.8px;top:414.8px;width:17.2px;height:1.0px;background:transparent;background:repeating-linear-gradient(90deg,#a0a0a0 0 5px,transparent 5px 5.8px,#a0a0a0 5.8px 8.8px,transparent 8.8px 9.6px,#a0a0a0 9.6px 15.6px,transparent 15.6px 16.6px);"></div>
<div class="a" style="left:549.8px;top:417.4px;width:13.2px;height:1.0px;background:transparent;background:repeating-linear-gradient(90deg,#cacaca 0 3px,transparent 3px 3.8px,#cacaca 3.8px 6.8px,transparent 6.8px 7.6px,#cacaca 7.6px 11.6px,transparent 11.6px 12.6px);"></div>
<div class="a" style="left:549.8px;top:419.7px;width:15.2px;height:1.0px;background:transparent;background:repeating-linear-gradient(90deg,#cacaca 0 3px,transparent 3px 3.8px,#cacaca 3.8px 4.8px,transparent 4.8px 5.6px,#cacaca 5.6px 10.6px,transparent 10.6px 11.6px);"></div>
<div class="a" style="left:549.8px;top:422.3px;width:21.2px;height:1.0px;background:transparent;background:repeating-linear-gradient(90deg,#cacaca 0 2px,transparent 2px 2.8px,#cacaca 2.8px 4.8px,transparent 4.8px 5.6px,#cacaca 5.6px 11.6px,transparent 11.6px 12.6px);"></div>
<div class="a" style="left:599px;top:414.8px;width:29px;height:1.0px;background:transparent;background:repeating-linear-gradient(90deg,#a0a0a0 0 4px,transparent 4px 4.8px,#a0a0a0 4.8px 5.8px,transparent 5.8px 6.6px,#a0a0a0 6.6px 12.6px,transparent 12.6px 13.6px);"></div>
<div class="a" style="left:599px;top:417.4px;width:12px;height:1.0px;background:transparent;background:repeating-linear-gradient(90deg,#cacaca 0 4px,transparent 4px 4.8px,#cacaca 4.8px 6.8px,transparent 6.8px 7.6px,#cacaca 7.6px 12.6px,transparent 12.6px 13.6px);"></div>
<div class="a" style="left:599px;top:419.7px;width:16px;height:1.0px;background:transparent;background:repeating-linear-gradient(90deg,#cacaca 0 4px,transparent 4px 4.8px,#cacaca 4.8px 7.8px,transparent 7.8px 8.6px,#cacaca 8.6px 11.6px,transparent 11.6px 12.6px);"></div>
<div class="a" style="left:599px;top:422.3px;width:18px;height:1.0px;background:transparent;background:repeating-linear-gradient(90deg,#cacaca 0 2px,transparent 2px 2.8px,#cacaca 2.8px 5.8px,transparent 5.8px 6.6px,#cacaca 6.6px 9.6px,transparent 9.6px 10.6px);"></div>
<div class="a" style="left:642.6px;top:413.6px;width:36.4px;height:13px;background:#ecbcbd;"></div>
<div class="a" style="left:643px;top:414.6px;width:36px;height:1.02px;background:transparent;background:repeating-linear-gradient(90deg,#4b4b4b 0 3px,transparent 3px 3.8px,#4b4b4b 3.8px 6.8px,transparent 6.8px 7.6px,#4b4b4b 7.6px 10.6px,transparent 10.6px 11.6px);"></div>
<div class="a" style="left:643px;top:416.6px;width:17px;height:1.0px;background:transparent;background:repeating-linear-gradient(90deg,#959595 0 3px,transparent 3px 3.8px,#959595 3.8px 4.8px,transparent 4.8px 5.6px,#959595 5.6px 11.6px,transparent 11.6px 12.6px);"></div>
<div class="a" style="left:643.5px;top:420.5px;width:12.5px;height:1.0px;background:transparent;background:repeating-linear-gradient(90deg,#b69c9c 0 3px,transparent 3px 3.8px,#b69c9c 3.8px 6.8px,transparent 6.8px 7.6px,#b69c9c 7.6px 12.6px,transparent 12.6px 13.6px);"></div>
<div class="a" style="left:643.5px;top:423px;width:19.5px;height:1.0px;background:transparent;background:repeating-linear-gradient(90deg,#b69c9c 0 5px,transparent 5px 5.8px,#b69c9c 5.8px 6.8px,transparent 6.8px 7.6px,#b69c9c 7.6px 10.6px,transparent 10.6px 11.6px);"></div>
<div class="a" style="left:550.6px;top:428px;width:38.2px;height:1.02px;background:transparent;background:repeating-linear-gradient(90deg,#4b4b4b 0 5px,transparent 5px 5.8px,#4b4b4b 5.8px 8.8px,transparent 8.8px 9.6px,#4b4b4b 9.6px 13.6px,transparent 13.6px 14.6px);"></div>
<div class="a" style="left:550.6px;top:430.4px;width:36.4px;height:1.02px;background:transparent;background:repeating-linear-gradient(90deg,#4b4b4b 0 5px,transparent 5px 5.8px,#4b4b4b 5.8px 7.8px,transparent 7.8px 8.6px,#4b4b4b 8.6px 12.6px,transparent 12.6px 13.6px);"></div>
<div class="a" style="left:551.5px;top:433.5px;width:13.5px;height:1.0px;background:transparent;background:repeating-linear-gradient(90deg,#bfbfbf 0 4px,transparent 4px 4.8px,#bfbfbf 4.8px 7.8px,transparent 7.8px 8.6px,#bfbfbf 8.6px 12.6px,transparent 12.6px 13.6px);"></div>
<div class="a" style="left:551.5px;top:436px;width:17.5px;height:1.0px;background:transparent;background:repeating-linear-gradient(90deg,#bfbfbf 0 3px,transparent 3px 3.8px,#bfbfbf 3.8px 4.8px,transparent 4.8px 5.6px,#bfbfbf 5.6px 11.6px,transparent 11.6px 12.6px);"></div>
<div class="a" style="left:551.5px;top:438.7px;width:16.5px;height:1.0px;background:transparent;background:repeating-linear-gradient(90deg,#bfbfbf 0 4px,transparent 4px 4.8px,#bfbfbf 4.8px 6.8px,transparent 6.8px 7.6px,#bfbfbf 7.6px 12.6px,transparent 12.6px 13.6px);"></div>
<div class="a" style="left:551.5px;top:441.4px;width:12.5px;height:1.0px;background:transparent;background:repeating-linear-gradient(90deg,#bfbfbf 0 5px,transparent 5px 5.8px,#bfbfbf 5.8px 6.8px,transparent 6.8px 7.6px,#bfbfbf 7.6px 10.6px,transparent 10.6px 11.6px);"></div>
<div class="a" style="left:551.5px;top:444px;width:17.5px;height:1.0px;background:transparent;background:repeating-linear-gradient(90deg,#bfbfbf 0 2px,transparent 2px 2.8px,#bfbfbf 2.8px 5.8px,transparent 5.8px 6.6px,#bfbfbf 6.6px 10.6px,transparent 10.6px 11.6px);"></div>
<div class="a" style="left:600px;top:430px;width:22.7px;height:1.02px;background:transparent;background:repeating-linear-gradient(90deg,#4b4b4b 0 3px,transparent 3px 3.8px,#4b4b4b 3.8px 6.8px,transparent 6.8px 7.6px,#4b4b4b 7.6px 12.6px,transparent 12.6px 13.6px);"></div>
<div class="a" style="left:600px;top:433.5px;width:14px;height:1.0px;background:transparent;background:repeating-linear-gradient(90deg,#bfbfbf 0 2px,transparent 2px 2.8px,#bfbfbf 2.8px 4.8px,transparent 4.8px 5.6px,#bfbfbf 5.6px 9.6px,transparent 9.6px 10.6px);"></div>
<div class="a" style="left:600px;top:436px;width:19px;height:1.0px;background:transparent;background:repeating-linear-gradient(90deg,#bfbfbf 0 5px,transparent 5px 5.8px,#bfbfbf 5.8px 7.8px,transparent 7.8px 8.6px,#bfbfbf 8.6px 14.6px,transparent 14.6px 15.6px);"></div>
<div class="a" style="left:600px;top:438.7px;width:12px;height:1.0px;background:transparent;background:repeating-linear-gradient(90deg,#bfbfbf 0 3px,transparent 3px 3.8px,#bfbfbf 3.8px 4.8px,transparent 4.8px 5.6px,#bfbfbf 5.6px 11.6px,transparent 11.6px 12.6px);"></div>
<div class="a" style="left:600px;top:441.4px;width:16px;height:1.0px;background:transparent;background:repeating-linear-gradient(90deg,#bfbfbf 0 2px,transparent 2px 2.8px,#bfbfbf 2.8px 3.8px,transparent 3.8px 4.6px,#bfbfbf 4.6px 9.6px,transparent 9.6px 10.6px);"></div>
<div class="a" style="left:645px;top:430px;width:17.6px;height:1.02px;background:transparent;background:repeating-linear-gradient(90deg,#4b4b4b 0 3px,transparent 3px 3.8px,#4b4b4b 3.8px 6.8px,transparent 6.8px 7.6px,#4b4b4b 7.6px 10.6px,transparent 10.6px 11.6px);"></div>
<div class="a" style="left:648.7px;top:433.2px;width:12.3px;height:1.0px;background:transparent;background:repeating-linear-gradient(90deg,#bfbfbf 0 2px,transparent 2px 2.8px,#bfbfbf 2.8px 5.8px,transparent 5.8px 6.6px,#bfbfbf 6.6px 11.6px,transparent 11.6px 12.6px);"></div>
</div>
<div class="a" style="left:25px;top:712px;width:834px;height:8px;background:#474747;"></div>
<div class="t" style="left:30px;top:713px;font-size:7px;color:#cfcfcf;transform:scaleX(0.8);">20.66%</div>
<div class="t" style="left:70px;top:713px;font-size:7px;color:#bdbdbd;transform:scaleX(0.8);">2232 px x 2854 px (250 ppi)</div>
<div class="t" style="left:165px;top:713px;font-size:7px;color:#bdbdbd;transform:scaleX(1);">›</div>
<div class="a" style="left:859px;top:41px;width:10px;height:679px;background:#484848;"></div>
<div class="a" style="left:868.5px;top:41px;width:2px;height:679px;background:#424242;"></div>
<div class="a" style="left:870.5px;top:41px;width:25px;height:679px;background:#4b4b4b;"></div>
<div class="a" style="left:870.5px;top:49px;width:25px;height:663px;background:#535353;"></div>
<div class="t" style="left:884px;top:40px;font-size:8px;color:#c8c8c8;transform:scaleX(1);">«</div>
<div class="a" style="left:870px;top:97px;width:25px;height:2px;background:#474747;"></div>
<div class="a" style="left:870px;top:144px;width:25px;height:2px;background:#474747;"></div>
<div class="a" style="left:870px;top:173px;width:25px;height:2px;background:#474747;"></div>
<div class="a" style="left:870px;top:202px;width:25px;height:2px;background:#474747;"></div>
<svg style="left:875px;top:57px" width="16" height="16" viewBox="0 0 16 16"><path d="M1 2 H6 M1 4.5 H5 M1 7 H5 M1 9.5 H6" stroke="#d0d0d0" stroke-width="1"/><path d="M15 1.5 L8.5 9 L7 8 Z" fill="#d0d0d0"/><path d="M7 9 C5.5 9.5 5 11 4.5 14 C7 13 8.5 12 8.5 10 Z" fill="#d0d0d0"/></svg>
<svg style="left:875px;top:77px" width="16" height="16" viewBox="0 0 16 16"><circle cx="4" cy="4" r="2.6" fill="#d0d0d0"/><path d="M1 4 H15 M1 11 H15" stroke="#d0d0d0" stroke-width="1.2"/><path d="M14 7.5 L10 11 L14 14.5 Z" fill="#d0d0d0"/></svg>
<div class="t" style="left:877px;top:106px;font-size:12.5px;color:#d0d0d0;transform:scaleX(0.8);">A|</div>
<div class="t" style="left:879px;top:122px;font-size:14px;color:#d0d0d0;font-weight:bold;transform:scaleX(0.9);">¶</div>
<div class="t" style="left:877px;top:152px;font-size:14px;color:#d0d0d0;transform:scaleX(0.9);font-family:"Liberation Serif",serif;"><i>A</i></div>
<svg style="left:877px;top:182px" width="13" height="14" viewBox="0 0 13 14"><path d="M6.5 1 L12 4 V10 L6.5 13 L1 10 V4 Z" fill="#a8a8a8" stroke="#d0d0d0" stroke-width="1.2"/><path d="M1 4 L6.5 7 L12 4 M6.5 7 V13" stroke="#5a5a5a" stroke-width="1" fill="none"/></svg>
<div class="a" style="left:895px;top:41px;width:185px;height:679px;background:#474747;"></div>
<div class="a" style="left:1075px;top:41px;width:5px;height:679px;background:#4a4a4a;"></div>
<div class="t" style="left:1065px;top:40px;font-size:8px;color:#c8c8c8;transform:scaleX(1);">»</div>
<div class="a" style="left:896px;top:49px;width:179px;height:336px;background:#535353;"></div>
<div class="a" style="left:896px;top:49px;width:114px;height:19px;background:#454545;"></div>
<div class="a" style="left:1049px;top:49px;width:26px;height:19px;background:#454545;"></div>
<div class="t" style="left:900px;top:54px;font-size:8px;color:#a6a6a6;transform:scaleX(0.8);">Swatc</div>
<div class="t" style="left:923px;top:54px;font-size:8px;color:#a6a6a6;transform:scaleX(0.8);">Gradi</div>
<div class="t" style="left:946px;top:54px;font-size:8px;color:#a6a6a6;transform:scaleX(0.8);">Patter</div>
<div class="t" style="left:968px;top:54px;font-size:8px;color:#a6a6a6;transform:scaleX(0.8);">Histo</div>
<div class="t" style="left:991px;top:54px;font-size:8px;color:#a6a6a6;transform:scaleX(0.8);">Actio</div>
<div class="a" style="left:920px;top:50px;width:1px;height:17px;background:#424242;"></div>
<div class="a" style="left:943px;top:50px;width:1px;height:17px;background:#424242;"></div>
<div class="a" style="left:966px;top:50px;width:1px;height:17px;background:#424242;"></div>
<div class="a" style="left:988px;top:50px;width:1px;height:17px;background:#424242;"></div>
<div class="t" style="left:1014px;top:54px;font-size:8px;color:#efefef;font-weight:bold;transform:scaleX(0.82);">Properties</div>
<div class="a" style="left:1065px;top:56px;width:7px;height:1px;background:#bdbdbd;"></div>
<div class="a" style="left:1065px;top:58px;width:7px;height:1px;background:#bdbdbd;"></div>
<div class="a" style="left:1065px;top:60px;width:7px;height:1px;background:#bdbdbd;"></div>
<div class="a" style="left:903px;top:73px;width:13px;height:15px;background:#3a3a3a;"></div>
<svg style="left:905px;top:75px" width="9" height="11" viewBox="0 0 9 11"><path d="M1 0.5 H5.5 L8.5 3.5 V10.5 H1 Z M5.5 0.5 V3.5 H8.5" stroke="#e0e0e0" fill="none" stroke-width="1"/></svg>
<div class="t" style="left:920px;top:78px;font-size:8px;color:#d4d4d4;transform:scaleX(0.82);">Document</div>
<div class="a" style="left:896px;top:93px;width:170px;height:1px;background:#474747;"></div>
<svg style="left:900px;top:99.5px" width="7" height="5" viewBox="0 0 7 5"><path d="M0.5 0.8 L3.5 3.8 L6.5 0.8" stroke="#9a9a9a" fill="none" stroke-width="1"/></svg>
<div class="t" style="left:910px;top:99px;font-size:8px;color:#ececec;font-weight:bold;transform:scaleX(0.85);">Canvas</div>
<div class="t" style="left:929px;top:116px;font-size:8px;color:#b8b8b8;transform:scaleX(0.85);">W</div>
<div class="a" style="left:939px;top:114px;width:31px;height:10.5px;background:#3c3c3c;"></div>
<div class="t" style="left:942px;top:115.5px;font-size:8px;color:#dcdcdc;transform:scaleX(0.8);">2232 px</div>
<div class="t" style="left:982px;top:116px;font-size:8px;color:#b8b8b8;transform:scaleX(0.85);">X</div>
<div class="a" style="left:989px;top:114px;width:32px;height:10.5px;background:#4c4c4c;"></div>
<div class="t" style="left:993px;top:115.5px;font-size:8px;color:#6c6c6c;transform:scaleX(0.8);">0 px</div>
<div class="t" style="left:929px;top:133px;font-size:8px;color:#b8b8b8;transform:scaleX(0.85);">H</div>
<div class="a" style="left:939px;top:131.5px;width:31px;height:10.5px;background:#3c3c3c;"></div>
<div class="t" style="left:942px;top:133px;font-size:8px;color:#dcdcdc;transform:scaleX(0.8);">2854 px</div>
<div class="t" style="left:982px;top:133px;font-size:8px;color:#b8b8b8;transform:scaleX(0.85);">Y</div>
<div class="a" style="left:989px;top:131.5px;width:32px;height:10.5px;background:#4c4c4c;"></div>
<div class="t" style="left:993px;top:133px;font-size:8px;color:#6c6c6c;transform:scaleX(0.8);">0 px</div>
<svg style="left:907px;top:123px" width="7" height="11" viewBox="0 0 7 11"><circle cx="3.5" cy="3" r="2.2" stroke="#bdbdbd" fill="none" stroke-width="1.2"/><circle cx="3.5" cy="8" r="2.2" stroke="#bdbdbd" fill="none" stroke-width="1.2"/></svg>
<div class="a" style="left:940px;top:151px;width:13px;height:16px;background:#393939;"></div>
<svg style="left:942px;top:153px" width="9" height="12" viewBox="0 0 9 12"><rect x="0.5" y="0.5" width="8" height="11" stroke="#ddd" fill="none"/><circle cx="4.5" cy="4" r="1.6" fill="#eee"/><rect x="2.5" y="6" width="4" height="5" fill="#eee"/></svg>
<svg style="left:956px;top:154px" width="12" height="10" viewBox="0 0 12 10"><rect x="0.5" y="0.5" width="11" height="9" stroke="#ddd" fill="none"/><circle cx="6" cy="3.5" r="1.6" fill="#eee"/><rect x="3.5" y="5.5" width="5" height="4" fill="#eee"/></svg>
<div class="t" style="left:939px;top:177px;font-size:8px;color:#d4d4d4;transform:scaleX(0.8);">Resolution: 250 pixels/inch</div>
<div class="t" style="left:918px;top:194px;font-size:8px;color:#c4c4c4;transform:scaleX(0.8);">Mode</div>
<div class="a" style="left:939px;top:192px;width:82px;height:13px;background:#444444;"></div>
<div class="t" style="left:943px;top:195px;font-size:8px;color:#d8d8d8;transform:scaleX(0.82);">RGB Color</div>
<svg style="left:1013px;top:197.0px" width="6" height="4" viewBox="0 0 6 4"><path d="M0.5 0.8 L3 3.2 L5.5 0.8" stroke="#9a9a9a" fill="none" stroke-width="1"/></svg>
<div class="a" style="left:939px;top:209px;width:82px;height:14px;background:#444444;"></div>
<div class="t" style="left:943px;top:212px;font-size:8px;color:#d8d8d8;transform:scaleX(0.82);">16 Bits/Channel</div>
<svg style="left:1013px;top:214.5px" width="6" height="4" viewBox="0 0 6 4"><path d="M0.5 0.8 L3 3.2 L5.5 0.8" stroke="#9a9a9a" fill="none" stroke-width="1"/></svg>
<div class="t" style="left:926px;top:231px;font-size:8px;color:#b0b0b0;transform:scaleX(0.8);">Fill</div>
<div class="a" style="left:938px;top:227px;width:13px;height:13px;background:#4a4a4a;border:1px solid #444;"></div>
<div class="a" style="left:953px;top:229px;width:68px;height:12px;background:#444444;"></div>
<div class="t" style="left:957px;top:232px;font-size:8px;color:#d8d8d8;transform:scaleX(0.82);">Transparent</div>
<svg style="left:1013px;top:233.5px" width="6" height="4" viewBox="0 0 6 4"><path d="M0.5 0.8 L3 3.2 L5.5 0.8" stroke="#9a9a9a" fill="none" stroke-width="1"/></svg>
<div class="a" style="left:896px;top:247px;width:170px;height:1px;background:#474747;"></div>
<svg style="left:900px;top:255.5px" width="7" height="5" viewBox="0 0 7 5"><path d="M0.5 0.8 L3.5 3.8 L6.5 0.8" stroke="#9a9a9a" fill="none" stroke-width="1"/></svg>
<div class="t" style="left:911px;top:254px;font-size:8px;color:#ececec;font-weight:bold;transform:scaleX(0.85);">Rulers &amp; Grids</div>
<div class="a" style="left:904px;top:271px;width:14px;height:15px;background:#393939;"></div>
<svg style="left:906px;top:273px" width="10" height="11" viewBox="0 0 10 11"><path d="M1 11 V1 H10" stroke="#eee" stroke-width="2.2" fill="none"/><path d="M4 1 V0 M7 1 V0" stroke="#eee"/></svg>
<svg style="left:925px;top:272px" width="12" height="13" viewBox="0 0 12 13"><rect x="0.5" y="0.5" width="11" height="12" stroke="#ccc" fill="none"/><path d="M4 0 V13 M8 0 V13 M0 4.5 H12 M0 8.5 H12" stroke="#ccc"/></svg>
<svg style="left:946px;top:272px" width="12" height="13" viewBox="0 0 12 13"><rect x="0.5" y="0.5" width="11" height="12" stroke="#aaa" fill="none"/><circle cx="6" cy="6.5" r="3.5" stroke="#999" fill="none" stroke-dasharray="1 1"/></svg>
<div class="a" style="left:975px;top:272px;width:46px;height:13px;background:#444444;"></div>
<div class="t" style="left:979px;top:275px;font-size:8px;color:#d8d8d8;transform:scaleX(0.82);">Pixels</div>
<svg style="left:1013px;top:277.0px" width="6" height="4" viewBox="0 0 6 4"><path d="M0.5 0.8 L3 3.2 L5.5 0.8" stroke="#9a9a9a" fill="none" stroke-width="1"/></svg>
<div class="a" style="left:896px;top:294px;width:170px;height:1px;background:#474747;"></div>
<svg style="left:900px;top:302.5px" width="7" height="5" viewBox="0 0 7 5"><path d="M0.5 0.8 L3.5 3.8 L6.5 0.8" stroke="#9a9a9a" fill="none" stroke-width="1"/></svg>
<div class="t" style="left:910px;top:301px;font-size:8px;color:#ececec;font-weight:bold;transform:scaleX(0.85);">Guides</div>
<div class="a" style="left:903px;top:317px;width:16px;height:16px;background:#393939;"></div>
<svg style="left:905px;top:319px" width="12" height="12" viewBox="0 0 12 12"><path d="M3 0 V12 M6 0 V12 M0 4 H12 M0 8 H12" stroke="#ddd" stroke-width="1"/></svg>
<svg style="left:925px;top:319px" width="13" height="13" viewBox="0 0 13 13"><path d="M3 0 V12 M6 0 V12 M0 4 H9 M0 8 H8" stroke="#ccc" stroke-width="1"/><rect x="8" y="8" width="5" height="5" fill="#ddd"/></svg>
<div class="a" style="left:944px;top:317px;width:16px;height:16px;background:#393939;"></div>
<svg style="left:946px;top:319px" width="12" height="13" viewBox="0 0 12 13"><path d="M2 0 V12 M8 3 H3 L5 1 M3 3 L5 5" stroke="#ddd" stroke-width="1" fill="none"/><rect x="7" y="8" width="4" height="5" fill="#ddd"/></svg>
<div class="a" style="left:975px;top:320px;width:46px;height:13px;background:#444444;"></div>
<div class="a" style="left:980px;top:326px;width:30px;height:1.5px;background:#dcdcdc;"></div>
<svg style="left:1013px;top:325px" width="6" height="4" viewBox="0 0 6 4"><path d="M0.5 0.8 L3 3.2 L5.5 0.8" stroke="#9a9a9a" fill="none" stroke-width="1"/></svg>
<div class="a" style="left:896px;top:341px;width:170px;height:1px;background:#474747;"></div>
<svg style="left:900px;top:349.5px" width="7" height="5" viewBox="0 0 7 5"><path d="M0.5 0.8 L3.5 3.8 L6.5 0.8" stroke="#9a9a9a" fill="none" stroke-width="1"/></svg>
<div class="t" style="left:911px;top:348px;font-size:8px;color:#ececec;font-weight:bold;transform:scaleX(0.85);">Quick Actions</div>
<div class="a" style="left:1066px;top:93px;width:9px;height:275px;background:#4a4a4a;"></div>
<div class="a" style="left:1067px;top:100px;width:7px;height:227px;background:#5d5d5d;"></div>
<div class="a" style="left:896px;top:385px;width:179px;height:2px;background:#474747;"></div>
<div class="a" style="left:896px;top:387px;width:179px;height:325px;background:#535353;"></div>
<div class="a" style="left:926px;top:387px;width:149px;height:20px;background:#454545;"></div>
<div class="t" style="left:901px;top:393px;font-size:8px;color:#e0e0e0;font-weight:bold;transform:scaleX(0.82);">Layers</div>
<div class="a" style="left:1065px;top:394px;width:7px;height:1px;background:#bdbdbd;"></div>
<div class="a" style="left:1065px;top:396px;width:7px;height:1px;background:#bdbdbd;"></div>
<div class="a" style="left:1065px;top:398px;width:7px;height:1px;background:#bdbdbd;"></div>
<div class="a" style="left:899px;top:413px;width:53px;height:13px;background:#3e3e3e;"></div>
<svg style="left:902px;top:415px" width="8" height="9" viewBox="0 0 8 9"><circle cx="3.3" cy="3.3" r="2.4" stroke="#ddd" fill="none" stroke-width="1.3"/><path d="M5 5 L7.5 8" stroke="#ddd" stroke-width="1.5"/></svg>
<div class="t" style="left:912px;top:416px;font-size:8px;color:#d4d4d4;transform:scaleX(0.8);">Kind</div>
<svg style="left:944px;top:418px" width="7" height="5" viewBox="0 0 7 5"><path d="M0.5 0.8 L3.5 3.8 L6.5 0.8" stroke="#999" fill="none" stroke-width="1"/></svg>
<svg style="left:958px;top:414px" width="11" height="11" viewBox="0 0 11 11"><rect x="0.5" y="1.5" width="10" height="8" stroke="#c8c8c8" fill="none"/><path d="M2 8 L4.5 5 L6 7 L7.5 5.5 L9 8 Z" fill="#c8c8c8"/></svg>
<svg style="left:974px;top:414px" width="11" height="11" viewBox="0 0 11 11"><circle cx="5.5" cy="5.5" r="4.6" stroke="#c8c8c8" fill="none" stroke-width="1.2"/><path d="M5.5 1 A4.5 4.5 0 0 1 5.5 10 Z" fill="#c8c8c8"/></svg>
<svg style="left:990px;top:415px" width="9" height="9" viewBox="0 0 10 11"><path d="M0.3 0.3 H9.7 V3.2 H8.8 L8.4 1.6 H6.2 V9.6 H7.8 V10.8 H2.2 V9.6 H3.8 V1.6 H1.6 L1.2 3.2 H0.3 Z" fill="#c8c8c8"/></svg>
<svg style="left:1004px;top:414px" width="11" height="11" viewBox="0 0 11 11"><rect x="2" y="2" width="7" height="7" stroke="#c8c8c8" fill="none"/><path d="M0 2 H3 M8 2 H11 M0 9 H3 M8 9 H11 M2 0 V3 M9 0 V3 M2 8 V11 M9 8 V11" stroke="#c8c8c8"/></svg>
<svg style="left:1019px;top:413px" width="11" height="13" viewBox="0 0 11 13"><path d="M3 1 H7 L10 4 V12 H3 Z" stroke="#c8c8c8" fill="none"/><rect x="1" y="7" width="5" height="5" fill="#c8c8c8"/></svg>
<svg style="left:1034px;top:412px" width="8" height="13" viewBox="0 0 8 13"><circle cx="4" cy="4" r="3.5" fill="#eaeaea"/><rect x="3" y="8" width="2" height="4" fill="#555"/></svg>
<div class="a" style="left:896px;top:428px;width:170px;height:1px;background:#4a4a4a;"></div>
<div class="a" style="left:899px;top:433px;width:80px;height:13px;background:#4d4d4d;"></div>
<div class="t" style="left:903px;top:436px;font-size:8px;color:#787878;transform:scaleX(0.8);">Normal</div>
<svg style="left:971px;top:438px" width="7" height="5" viewBox="0 0 7 5"><path d="M0.5 0.8 L3.5 3.8 L6.5 0.8" stroke="#666" fill="none" stroke-width="1"/></svg>
<div class="t" style="left:983px;top:436px;font-size:8px;color:#7a7a7a;transform:scaleX(0.8);">Opacity:</div>
<div class="a" style="left:1009px;top:433px;width:22px;height:13px;background:#474747;"></div>
<div class="t" style="left:1012px;top:436px;font-size:8px;color:#666;transform:scaleX(0.8);">100%</div>
<div class="a" style="left:1031px;top:433px;width:10px;height:13px;background:#4e4e4e;"></div>
<div class="a" style="left:896px;top:448px;width:170px;height:1px;background:#4a4a4a;"></div>
<div class="t" style="left:899px;top:455px;font-size:8px;color:#7a7a7a;transform:scaleX(0.8);">Lock:</div>
<svg style="left:920px;top:453px" width="10" height="11" viewBox="0 0 10 11"><path d="M1 1 H3 V3 H1Z M5 1 H7 V3 H5Z M3 3 H5 V5 H3Z M7 3 H9 V5 H7Z M1 5 H3 V7 H1Z M5 5 H7 V7 H5Z M3 7 H5 V9 H3Z M7 7 H9 V9 H7Z" fill="#8a8a8a"/></svg>
<svg style="left:933px;top:452px" width="11" height="12" viewBox="0 0 11 12"><path d="M10 1 L5 7 L4 6 Z" fill="#8a8a8a"/><path d="M4 7 C2.5 7.5 2 9 1 11.5 C3.5 11 5 10 5 8 Z" fill="#8a8a8a"/></svg>
<svg style="left:946px;top:452px" width="11" height="12" viewBox="0 0 11 12"><path d="M5.5 0.5 V11.5 M0 6 H11" stroke="#8a8a8a" stroke-width="1.2"/><path d="M5.5 0 L7.5 2.5 H3.5Z M5.5 12 L7.5 9.5 H3.5Z M0 6 L2.5 4 V8Z M11 6 L8.5 4 V8Z" fill="#8a8a8a"/></svg>
<svg style="left:960px;top:453px" width="11" height="11" viewBox="0 0 11 11"><path d="M0 3 H8 V11 M3 0 V8 H11" stroke="#8a8a8a" fill="none" stroke-width="1.1"/></svg>
<svg style="left:974px;top:452px" width="10" height="12" viewBox="0 0 10 12"><path d="M2.5 5 V3.5 A2.5 2.5 0 0 1 7.5 3.5 V5" stroke="#8a8a8a" fill="none" stroke-width="1.3"/><rect x="1" y="5" width="8" height="6.5" fill="#8a8a8a"/></svg>
<div class="t" style="left:998px;top:455px;font-size:8px;color:#7a7a7a;transform:scaleX(0.8);">Fill:</div>
<div class="a" style="left:1009px;top:452px;width:22px;height:13px;background:#474747;"></div>
<div class="t" style="left:1012px;top:455px;font-size:8px;color:#666;transform:scaleX(0.8);">100%</div>
<div class="a" style="left:1031px;top:452px;width:10px;height:13px;background:#4e4e4e;"></div>
<div class="a" style="left:896px;top:467px;width:170px;height:1px;background:#4a4a4a;"></div>
<div class="a" style="left:918px;top:468px;width:1px;height:243px;background:#4c4c4c;"></div>
<svg style="left:901px;top:476px" width="11" height="7" viewBox="0 0 11 7"><path d="M0.5 3.5 C3 0 8 0 10.5 3.5 C8 7 3 7 0.5 3.5 Z" stroke="#b4b4b4" fill="none" stroke-width="1.1"/><circle cx="5.5" cy="3.5" r="1.5" fill="#b4b4b4"/></svg>
<svg style="left:927px;top:477px" width="7" height="5" viewBox="0 0 7 5"><path d="M0.5 0.8 L3.5 3.8 L6.5 0.8" stroke="#bbb" fill="none" stroke-width="1"/></svg>
<svg style="left:934px;top:474px" width="12" height="10" viewBox="0 0 12 10"><path d="M0 1 H4.5 L5.5 2.5 H12 V10 H0 Z" fill="#e4e4e4"/><rect x="1" y="3.5" width="10" height="1" fill="#777"/></svg>
<div class="t" style="left:951px;top:476px;font-size:8px;color:#e0e0e0;transform:scaleX(0.82);">edite text</div>
<div class="a" style="left:896px;top:486.5px;width:170px;height:1px;background:#4a4a4a;"></div>
<svg style="left:901px;top:498.3px" width="11" height="7" viewBox="0 0 11 7"><path d="M0.5 3.5 C3 0 8 0 10.5 3.5 C8 7 3 7 0.5 3.5 Z" stroke="#b4b4b4" fill="none" stroke-width="1.1"/><circle cx="5.5" cy="3.5" r="1.5" fill="#b4b4b4"/></svg>
<svg style="left:942.5px;top:496.3px" width="10" height="11" viewBox="0 0 10 11"><path d="M0.3 0.3 H9.7 V3 H9 L8.6 1.3 H5.7 V9.9 H7.6 V10.8 H2.4 V9.9 H4.3 V1.3 H1.4 L1 3 H0.3 Z" fill="#e6e6e6"/></svg>
<div class="t" style="left:963px;top:497.8px;font-size:8px;color:#e0e0e0;transform:scaleX(0.82);">Layer 2</div>
<div class="a" style="left:896px;top:515.6px;width:170px;height:1px;background:#4a4a4a;"></div>
<svg style="left:901px;top:526.9px" width="11" height="7" viewBox="0 0 11 7"><path d="M0.5 3.5 C3 0 8 0 10.5 3.5 C8 7 3 7 0.5 3.5 Z" stroke="#b4b4b4" fill="none" stroke-width="1.1"/><circle cx="5.5" cy="3.5" r="1.5" fill="#b4b4b4"/></svg>
<div class="a" style="left:938px;top:520.4px;width:16px;height:20px;background:#fff;background:conic-gradient(#d8d8d8 25%,#fff 0 50%,#d8d8d8 0 75%,#fff 0) 0 0/6px 6px;border:1px solid #444;"></div>
<div class="a" style="left:940px;top:522.4px;width:3px;height:4px;background:#a05050;"></div>
<div class="t" style="left:959px;top:526.4px;font-size:8px;color:#e0e0e0;transform:scaleX(0.82);">Layer 3</div>
<div class="a" style="left:896px;top:544.2px;width:170px;height:1px;background:#4a4a4a;"></div>
<svg style="left:901px;top:555.5px" width="11" height="7" viewBox="0 0 11 7"><path d="M0.5 3.5 C3 0 8 0 10.5 3.5 C8 7 3 7 0.5 3.5 Z" stroke="#b4b4b4" fill="none" stroke-width="1.1"/><circle cx="5.5" cy="3.5" r="1.5" fill="#b4b4b4"/></svg>
<svg style="left:942.5px;top:553.5px" width="10" height="11" viewBox="0 0 10 11"><path d="M0.3 0.3 H9.7 V3 H9 L8.6 1.3 H5.7 V9.9 H7.6 V10.8 H2.4 V9.9 H4.3 V1.3 H1.4 L1 3 H0.3 Z" fill="#e6e6e6"/></svg>
<div class="t" style="left:963px;top:555.0px;font-size:8px;color:#e0e0e0;transform:scaleX(0.82);">cilla0000000...&lt;&lt;&lt;&lt;&lt;&lt;&lt;&lt;&lt;0 d</div>
<div class="a" style="left:896px;top:572.8px;width:170px;height:1px;background:#4a4a4a;"></div>
<div class="a" style="left:902px;top:580.6px;width:9px;height:11px;background:#505050;"></div>
<svg style="left:942.5px;top:582.1px" width="10" height="11" viewBox="0 0 10 11"><path d="M0.3 0.3 H9.7 V3 H9 L8.6 1.3 H5.7 V9.9 H7.6 V10.8 H2.4 V9.9 H4.3 V1.3 H1.4 L1 3 H0.3 Z" fill="#e6e6e6"/></svg>
<div class="t" style="left:963px;top:583.6px;font-size:8px;color:#e0e0e0;transform:scaleX(0.82);">1ss</div>
<div class="a" style="left:896px;top:601.4px;width:170px;height:1px;background:#4a4a4a;"></div>
<svg style="left:901px;top:612.7px" width="11" height="7" viewBox="0 0 11 7"><path d="M0.5 3.5 C3 0 8 0 10.5 3.5 C8 7 3 7 0.5 3.5 Z" stroke="#b4b4b4" fill="none" stroke-width="1.1"/><circle cx="5.5" cy="3.5" r="1.5" fill="#b4b4b4"/></svg>
<svg style="left:942.5px;top:610.7px" width="10" height="11" viewBox="0 0 10 11"><path d="M0.3 0.3 H9.7 V3 H9 L8.6 1.3 H5.7 V9.9 H7.6 V10.8 H2.4 V9.9 H4.3 V1.3 H1.4 L1 3 H0.3 Z" fill="#e6e6e6"/></svg>
<div class="t" style="left:963px;top:612.2px;font-size:8px;color:#e0e0e0;transform:scaleX(0.82);">169</div>
<div class="a" style="left:896px;top:630.0px;width:170px;height:1px;background:#4a4a4a;"></div>
<svg style="left:901px;top:641.3px" width="11" height="7" viewBox="0 0 11 7"><path d="M0.5 3.5 C3 0 8 0 10.5 3.5 C8 7 3 7 0.5 3.5 Z" stroke="#b4b4b4" fill="none" stroke-width="1.1"/><circle cx="5.5" cy="3.5" r="1.5" fill="#b4b4b4"/></svg>
<svg style="left:942.5px;top:639.3px" width="10" height="11" viewBox="0 0 10 11"><path d="M0.3 0.3 H9.7 V3 H9 L8.6 1.3 H5.7 V9.9 H7.6 V10.8 H2.4 V9.9 H4.3 V1.3 H1.4 L1 3 H0.3 Z" fill="#e6e6e6"/></svg>
<div class="t" style="left:963px;top:640.8px;font-size:8px;color:#e0e0e0;transform:scaleX(0.82);">m</div>
<div class="a" style="left:896px;top:658.6px;width:170px;height:1px;background:#4a4a4a;"></div>
<svg style="left:901px;top:669.9px" width="11" height="7" viewBox="0 0 11 7"><path d="M0.5 3.5 C3 0 8 0 10.5 3.5 C8 7 3 7 0.5 3.5 Z" stroke="#b4b4b4" fill="none" stroke-width="1.1"/><circle cx="5.5" cy="3.5" r="1.5" fill="#b4b4b4"/></svg>
<svg style="left:942.5px;top:667.9px" width="10" height="11" viewBox="0 0 10 11"><path d="M0.3 0.3 H9.7 V3 H9 L8.6 1.3 H5.7 V9.9 H7.6 V10.8 H2.4 V9.9 H4.3 V1.3 H1.4 L1 3 H0.3 Z" fill="#e6e6e6"/></svg>
<div class="t" style="left:963px;top:669.4px;font-size:8px;color:#e0e0e0;transform:scaleX(0.82);">125 9</div>
<div class="a" style="left:896px;top:687.2px;width:170px;height:1px;background:#4a4a4a;"></div>
<svg style="left:901px;top:698.5px" width="11" height="7" viewBox="0 0 11 7"><path d="M0.5 3.5 C3 0 8 0 10.5 3.5 C8 7 3 7 0.5 3.5 Z" stroke="#b4b4b4" fill="none" stroke-width="1.1"/><circle cx="5.5" cy="3.5" r="1.5" fill="#b4b4b4"/></svg>
<svg style="left:942.5px;top:696.5px" width="10" height="11" viewBox="0 0 10 11"><path d="M0.3 0.3 H9.7 V3 H9 L8.6 1.3 H5.7 V9.9 H7.6 V10.8 H2.4 V9.9 H4.3 V1.3 H1.4 L1 3 H0.3 Z" fill="#e6e6e6"/></svg>
<div class="t" style="left:963px;top:698.0px;font-size:8px;color:#e0e0e0;transform:scaleX(0.82);">01.01.1990</div>
<div class="a" style="left:1066px;top:468px;width:9px;height:240px;background:#4a4a4a;"></div>
<div class="a" style="left:1067px;top:490px;width:7px;height:65px;background:#5e5e5e;"></div>
<div class="a" style="left:896px;top:705px;width:179px;height:15px;background:#535353;"></div>
<div class="a" style="left:896px;top:705px;width:170px;height:1px;background:#484848;"></div>
<svg style="left:947.5px;top:711px" width="11" height="7" viewBox="0 0 11 7"><rect x="0.5" y="1" width="5" height="5" rx="2.5" stroke="#8a8a8a" fill="none"/><rect x="5.5" y="1" width="5" height="5" rx="2.5" stroke="#8a8a8a" fill="none"/></svg>
<div class="t" style="left:966px;top:708.5px;font-size:10px;color:#8a8a8a;transform:scaleX(0.9);font-family:"Liberation Serif",serif;"><i>fx</i></div>
<svg style="left:981.5px;top:709.5px" width="10" height="9" viewBox="0 0 10 9"><rect x="0.5" y="0.5" width="9" height="8" stroke="#d8d8d8" fill="none"/><circle cx="5" cy="4.5" r="2.3" fill="#d8d8d8"/></svg>
<svg style="left:999px;top:709px" width="11" height="11" viewBox="0 0 11 11"><circle cx="5" cy="5" r="4.2" stroke="#d8d8d8" fill="none" stroke-width="1.2"/><path d="M5 0.8 A4.2 4.2 0 0 1 5 9.2 Z" fill="#d8d8d8"/></svg>
<svg style="left:1016px;top:710px" width="10" height="8" viewBox="0 0 10 8"><path d="M0 0.5 H3.5 L4.5 1.8 H10 V8 H0 Z" fill="#d8d8d8"/></svg>
<svg style="left:1033px;top:709px" width="9" height="10" viewBox="0 0 9 10"><rect x="0.5" y="0.5" width="8" height="9" stroke="#d8d8d8" fill="none"/><path d="M4.5 2.5 V7.5 M2 5 H7" stroke="#d8d8d8"/></svg>
<svg style="left:1049.5px;top:709px" width="8" height="10" viewBox="0 0 8 10"><path d="M0 1.5 H8 M2.5 1.5 V0.5 H5.5 V1.5 M1 2.5 H7 L6.5 10 H1.5 Z" stroke="#8a8a8a" fill="none"/></svg>
<div class="a" style="left:994px;top:655.5px;width:78px;height:48.5px;background:rgba(80,80,140,0.10);"></div>
<svg style="left:0;top:0" width="1080" height="720" viewBox="0 0 1080 720">
<g stroke="#1c1c1c" stroke-width="2.1" fill="none" stroke-linecap="butt">
<path d="M871.5 667 H858.6 V696 H871.8 M858.6 681.3 H870"/>
<path d="M877.5 666 V697 M894 666.5 L878 684 M884 677.5 L894.8 697"/>
<ellipse cx="907.6" cy="681.5" rx="10.2" ry="14.9"/>
<path d="M942 671 C939 667.5 936 666.8 933.5 666.8 C927 666.8 924 673 924 681.5 C924 690 927 696 933.5 696 C937.5 696 940 694.5 942.5 692 V681.5 H934"/>
<path d="M963 667 H950.3 V696 H963.3 M950.3 681.3 H961.5"/>
<path d="M966 697 L976 666.5 L986 697 M969.5 687 H982.5"/>
</g>
<circle cx="994.5" cy="694.5" r="2" fill="#1c1c1c"/>
<g stroke="#7b9f1e" stroke-width="2.9" fill="none">
<ellipse cx="1010.2" cy="681.5" rx="10.8" ry="14.9"/>
<path d="M1028.5 697.5 V666.5 H1034.5 C1040 666.5 1042.5 670 1042.5 674.5 C1042.5 679 1040 682.5 1034.5 682.5 H1028.5 M1035 682.5 L1043 697.5"/>
<path d="M1066.5 670.5 C1064 667.5 1061 666.6 1058 666.6 C1051 666.6 1047 673 1047 681.5 C1047 690 1051 696.5 1058 696.5 C1062 696.5 1065 695 1067.5 692.5 V681.5 H1058.5"/>
</g>
</svg>
</div></body></html>
